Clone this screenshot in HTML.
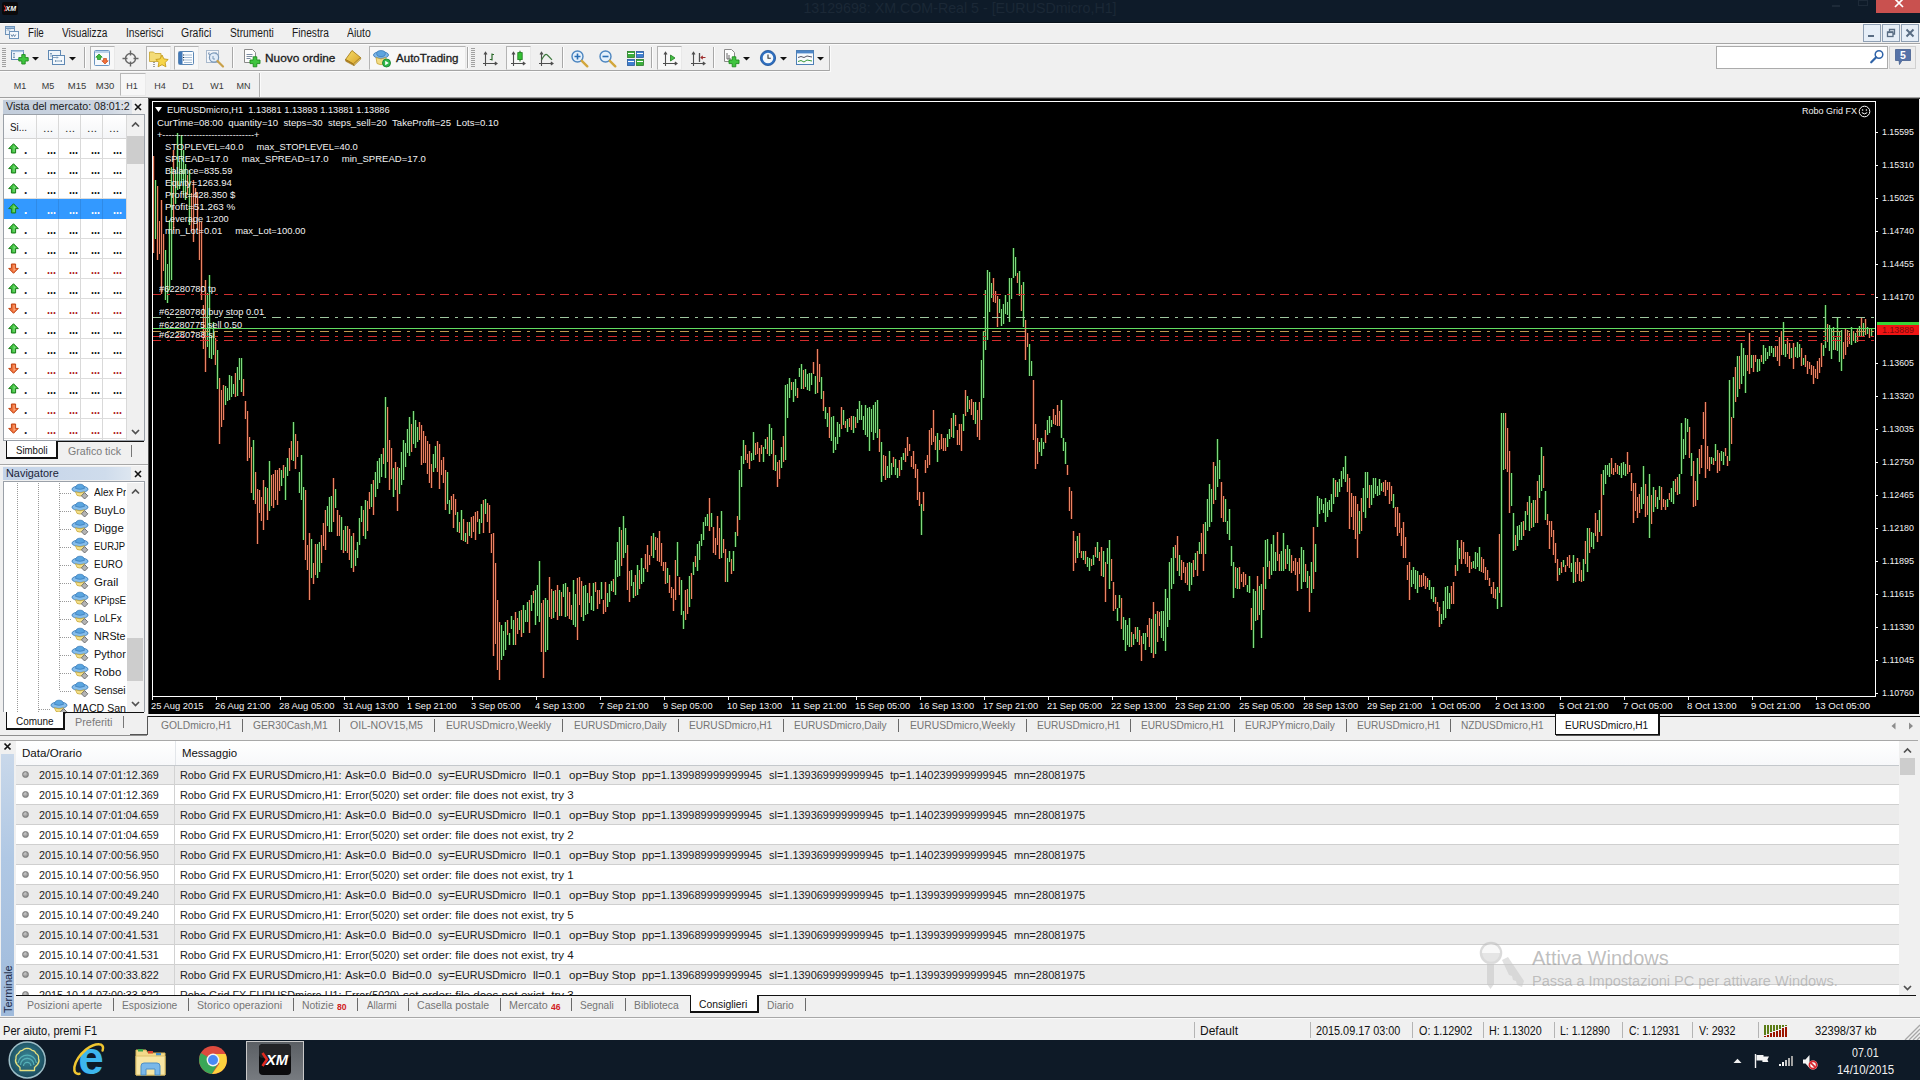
<!DOCTYPE html>
<html lang="it"><head><meta charset="utf-8"><title>13129698: XM.COM-Real 5 - [EURUSDmicro,H1]</title>
<style>
html,body{margin:0;padding:0;}
body{width:1920px;height:1080px;overflow:hidden;position:relative;background:#f0f0f0;font-family:"Liberation Sans",sans-serif;}
.t{position:absolute;white-space:pre;display:block;}
.r{position:absolute;box-sizing:border-box;}
svg{position:absolute;overflow:visible;}
</style></head>
<body>
<div class="r" style="left:0px;top:0px;width:1920px;height:23px;background:#0e1b29;"></div>
<svg style="left:2px;top:2px" width="17" height="14" viewBox="0 0 17 14"><rect x="0" y="0" width="16" height="13" rx="2" fill="#0a0a0c"/><path d="M2.2 3.5 L4 6.3 L2.2 9.2" stroke="#d32" stroke-width="1.2" fill="none"/><text x="3.6" y="9.3" font-family="Liberation Sans, sans-serif" font-weight="bold" font-style="italic" font-size="7.5" fill="#fff" textLength="10.5" lengthAdjust="spacingAndGlyphs">XM</text></svg>
<span class="t" style="top:-1.0px;font-size:15px;line-height:17px;color:#1b2836;left:960px;transform-origin:50% 50%;transform:translateX(-50%) scaleX(0.9485);">13129698: XM.COM-Real 5 - [EURUSDmicro,H1]</span>
<div class="r" style="left:1876px;top:0px;width:44px;height:13px;background:#c9514f;"></div>
<svg style="left:1893px;top:0px" width="12" height="8" viewBox="0 0 12 8"><path d="M2 -1 L10 7 M10 -1 L2 7" stroke="#fff" stroke-width="1.700" fill="none"/></svg>
<div class="r" style="left:1832px;top:5px;width:8px;height:2px;background:#1d2a38;"></div>
<div class="r" style="left:1858px;top:0px;width:10px;height:6px;background:transparent;border:1px solid #1d2a38;"></div>
<div class="r" style="left:0px;top:22px;width:1920px;height:1px;background:#08111a;"></div>
<div class="r" style="left:0px;top:23px;width:1920px;height:20px;background:#f0f0f0;"></div>
<div class="r" style="left:0px;top:23px;width:1920px;height:1px;background:#fbfbfb;"></div>
<div class="r" style="left:0px;top:43px;width:1920px;height:1px;background:#a5a5a5;"></div>
<div class="r" style="left:0px;top:44px;width:1920px;height:1px;background:#fbfbfb;"></div>
<svg style="left:4px;top:24px" width="16" height="16" viewBox="0 0 16 16"><rect x="1.5" y="2.5" width="9" height="8" fill="#e8f0f8" stroke="#6f94ba"/><rect x="1.5" y="2.5" width="9" height="2" fill="#9fc0e0" stroke="#6f94ba"/><rect x="5.5" y="7.5" width="9" height="7" fill="#f4f8fc" stroke="#6f94ba"/><path d="M7 10.5 l1.2 2 l1.2 -2 l1.2 2 l1.2 -2" stroke="#55789e" stroke-width="0.9" fill="none"/><path d="M3 6.5 l1 -1 l1 1 l1 -1" stroke="#55789e" stroke-width="0.8" fill="none"/></svg>
<span class="t" style="top:26.0px;font-size:12px;line-height:14px;color:#1a1a1a;left:28px;transform-origin:0 50%;transform:scaleX(0.8158);">File</span>
<span class="t" style="top:26.0px;font-size:12px;line-height:14px;color:#1a1a1a;left:62px;transform-origin:0 50%;transform:scaleX(0.8426);">Visualizza</span>
<span class="t" style="top:26.0px;font-size:12px;line-height:14px;color:#1a1a1a;left:126px;transform-origin:0 50%;transform:scaleX(0.8523);">Inserisci</span>
<span class="t" style="top:26.0px;font-size:12px;line-height:14px;color:#1a1a1a;left:181px;transform-origin:0 50%;transform:scaleX(0.8714);">Grafici</span>
<span class="t" style="top:26.0px;font-size:12px;line-height:14px;color:#1a1a1a;left:230px;transform-origin:0 50%;transform:scaleX(0.8529);">Strumenti</span>
<span class="t" style="top:26.0px;font-size:12px;line-height:14px;color:#1a1a1a;left:292px;transform-origin:0 50%;transform:scaleX(0.8488);">Finestra</span>
<span class="t" style="top:26.0px;font-size:12px;line-height:14px;color:#1a1a1a;left:346.5px;transform-origin:0 50%;transform:scaleX(0.8704);">Aiuto</span>
<div class="r" style="left:1863px;top:24px;width:18px;height:18px;background:#e6eef7;border:1px solid #8e9fb3;"></div>
<div class="r" style="left:1882px;top:24px;width:18px;height:18px;background:#e6eef7;border:1px solid #8e9fb3;"></div>
<div class="r" style="left:1901px;top:24px;width:18px;height:18px;background:#e6eef7;border:1px solid #8e9fb3;"></div>
<div class="r" style="left:1868px;top:35px;width:6px;height:2px;background:#586c83;"></div>
<svg style="left:1882px;top:24px" width="18" height="18" viewBox="0 0 18 18"><path d="M7.500 7.500 v-2 h5 v4.500 h-1.500" stroke="#586c83" stroke-width="1.300" fill="none"/><rect x="5.500" y="8" width="5.500" height="4.500" fill="none" stroke="#586c83" stroke-width="1.300"/><path d="M5.500 8.300 h5.500" stroke="#586c83" stroke-width="1.600"/></svg>
<svg style="left:1901px;top:24px" width="18" height="18" viewBox="0 0 18 18"><path d="M5.5 5.5 L12.5 12.5 M12.5 5.5 L5.5 12.5" stroke="#586c83" stroke-width="2" fill="none"/></svg>
<div class="r" style="left:0px;top:45px;width:1920px;height:25px;background:#f0f0f0;"></div>
<div class="r" style="left:0px;top:70px;width:830px;height:1px;background:#a5a5a5;"></div>
<div class="r" style="left:0px;top:71px;width:831px;height:1px;background:#fbfbfb;"></div>
<div class="r" style="left:830px;top:46px;width:1px;height:25px;background:#fbfbfb;"></div>
<div class="r" style="left:2px;top:48px;width:4px;height:19px;background:repeating-linear-gradient(to bottom,#a0a0a0 0,#a0a0a0 1px,transparent 1px,transparent 2px);"></div>
<div class="r" style="left:2px;top:75px;width:4px;height:19px;background:repeating-linear-gradient(to bottom,#a0a0a0 0,#a0a0a0 1px,transparent 1px,transparent 2px);"></div>
<svg style="left:10px;top:48px" width="20" height="20" viewBox="0 0 20 20"><rect x="1.5" y="2.5" width="12" height="9" fill="#f2f7fc" stroke="#5e88b3"/><rect x="1.5" y="2.5" width="12" height="1.6" fill="#a9c6e2"/><path d="M4 5 v5 M3 6 l1 -1 l1 1 M3 9 l1 1 l1 -1" stroke="#6d8fb0" stroke-width="0.8" fill="none"/><path d="M11 7 h3 v-3 h3.4 v3 h3 v3.4 h-3 v3 h-3.4 v-3 h-3 z" transform="translate(-2.2,2.6)" fill="#3fc53f" stroke="#1e8a1e" stroke-width="0.9"/></svg>
<svg style="left:32px;top:57px" width="7" height="4" viewBox="0 0 7 4"><path d="M0 0 H7 L3.5 3.6 Z" fill="#111"/></svg>
<svg style="left:47px;top:48px" width="20" height="20" viewBox="0 0 20 20"><rect x="1.5" y="2.5" width="12" height="9" fill="#eef4fa" stroke="#5e88b3"/><rect x="5.5" y="7.5" width="12" height="9" fill="#f4f8fc" stroke="#5e88b3"/><path d="M4 5 v4 M3 6 l1 -1 l1 1 M5 9.5 h6 M10 8.5 l1 1 l-1 1" stroke="#6d8fb0" stroke-width="0.8" fill="none"/><path d="M8 13 h7 M9 12 l-1 1 l1 1 M14 12 l1 1 l-1 1" stroke="#6d8fb0" stroke-width="0.8" fill="none"/></svg>
<svg style="left:69px;top:57px" width="7" height="4" viewBox="0 0 7 4"><path d="M0 0 H7 L3.5 3.6 Z" fill="#111"/></svg>
<div class="r" style="left:84px;top:47px;width:1px;height:21px;background:#a8a8a8;"></div>
<div class="r" style="left:85px;top:47px;width:1px;height:21px;background:#fdfdfd;"></div>
<div class="r" style="left:90px;top:46px;width:25px;height:24px;background:#f8f8f8;border:1px solid #b4b4b4;border-right-color:#e8e8e8;border-bottom-color:#e8e8e8;"></div>
<svg style="left:93px;top:49px" width="19" height="19" viewBox="0 0 19 19"><rect x="1.5" y="1.5" width="15" height="15" rx="1" fill="#f6f9fd" stroke="#6a95c2"/><rect x="2" y="2" width="14" height="2" fill="#b9d2ea"/><path d="M6 5 l3.2 3.2 h-1.7 v2.3 h-3 v-2.3 h-1.7 z" fill="#3dbb3d" stroke="#1d8a1d" stroke-width="0.7"/><path d="M12 15 l3.2 -3.2 h-1.7 v-2.3 h-3 v2.3 h-1.7 z" fill="#f0703a" stroke="#c8481a" stroke-width="0.7"/></svg>
<svg style="left:121px;top:49px" width="19" height="19" viewBox="0 0 19 19"><circle cx="9.5" cy="9.5" r="5" fill="none" stroke="#666" stroke-width="1.4"/><path d="M9.5 1.5 v5 M9.5 12.5 v5 M1.5 9.5 h5 M12.5 9.5 h5" stroke="#666" stroke-width="1.4"/></svg>
<div class="r" style="left:146px;top:46px;width:25px;height:24px;background:#f8f8f8;border:1px solid #b4b4b4;border-right-color:#e8e8e8;border-bottom-color:#e8e8e8;"></div>
<svg style="left:148px;top:48px" width="22" height="21" viewBox="0 0 22 21"><path d="M1.5 4 h4 l1.5 1.5 h6 v8 h-11.5 z" fill="#f4dc78" stroke="#c9a93a" stroke-width="0.9"/><path d="M14 7 l1.9 3.9 l4.3 0.6 l-3.1 3 l0.8 4.3 l-3.9 -2.1 l-3.9 2.1 l0.8 -4.3 l-3.1 -3 l4.3 -0.6 z" fill="#f7d64a" stroke="#c49a1a" stroke-width="0.9"/><path d="M6 14 v5" stroke="#444" stroke-width="1" stroke-dasharray="1 1"/></svg>
<div class="r" style="left:174px;top:46px;width:25px;height:24px;background:#f8f8f8;border:1px solid #b4b4b4;border-right-color:#e8e8e8;border-bottom-color:#e8e8e8;"></div>
<svg style="left:177px;top:49px" width="19" height="19" viewBox="0 0 19 19"><rect x="1.5" y="2.5" width="15" height="13" rx="1" fill="#fbfdff" stroke="#5b87b5"/><rect x="2" y="3" width="3.5" height="12" fill="#3f77b8"/><path d="M7 6 h8 M7 8.5 h8 M7 11 h8 M7 13.5 h8" stroke="#9bb4cf" stroke-width="0.9"/><path d="M6 6 h1 M6 8.5 h1 M6 11 h1" stroke="#234" stroke-width="1"/></svg>
<svg style="left:205px;top:48px" width="21" height="21" viewBox="0 0 21 21"><rect x="1.5" y="2.5" width="12" height="12" fill="#f3f6fa" stroke="#a9b9cc"/><path d="M3 5 l2 2 M4 4 v3 M11 4 v3 M10 5 l2 2" stroke="#7d98b5" stroke-width="0.8"/><circle cx="9" cy="9.5" r="4.6" fill="#dceaf7" fill-opacity="0.8" stroke="#7897b8" stroke-width="1.2"/><path d="M12.5 13 l5.5 5.5" stroke="#c9a14a" stroke-width="2.2" stroke-linecap="round"/><path d="M8 8 v3 h2" stroke="#6d8fb0" stroke-width="0.9" fill="none"/></svg>
<div class="r" style="left:232px;top:47px;width:1px;height:21px;background:#a8a8a8;"></div>
<div class="r" style="left:233px;top:47px;width:1px;height:21px;background:#fdfdfd;"></div>
<svg style="left:242px;top:48px" width="20" height="21" viewBox="0 0 20 21"><path d="M2.5 1.5 h8 l3 3 v10 h-11 z" fill="#fdfdfd" stroke="#8a8a8a"/><path d="M4.5 6.5 h6 M4.5 8.5 h6 M4.5 10.5 h4" stroke="#7a8aa0" stroke-width="1"/><path d="M8 12 h3.2 v-3.2 h3.6 v3.2 h3.2 v3.6 h-3.2 v3.2 h-3.6 v-3.2 h-3.2 z" fill="#3fc53f" stroke="#1e8a1e" stroke-width="0.9"/></svg>
<span class="t" style="top:52.0px;font-size:11px;line-height:12px;color:#1c1c1c;left:264.5px;transform-origin:0 50%;transform:scaleX(1.0769);-webkit-text-stroke:0.3px #1c1c1c;">Nuovo ordine</span>
<svg style="left:343px;top:49px" width="20" height="18" viewBox="0 0 20 18"><defs><linearGradient id="bk" x1="0" y1="0" x2="1" y2="1"><stop offset="0" stop-color="#f7de6a"/><stop offset="1" stop-color="#d9a42a"/></linearGradient></defs><path d="M9 1.500 L17.500 8.500 L10.500 15 L2.500 10.500 Z" fill="url(#bk)" stroke="#a8801c" stroke-width="0.900"/><path d="M2.500 10.500 L10.500 15 L11 16.600 L2.800 12.300 Z" fill="#c08a1e" stroke="#8e6a14" stroke-width="0.600"/><path d="M10.500 15 L17.500 8.500 L17.800 10 L11 16.600 Z" fill="#e9c45a" stroke="#8e6a14" stroke-width="0.600"/></svg>
<div class="r" style="left:369px;top:46px;width:97px;height:24px;background:#f8f8f8;border:1px solid #b4b4b4;border-right-color:#e8e8e8;border-bottom-color:#e8e8e8;"></div>
<svg style="left:372px;top:48px" width="20" height="21" viewBox="0 0 20 21"><ellipse cx="9" cy="7" rx="7.5" ry="3.4" fill="#7fb6e6" stroke="#3d7db8" stroke-width="0.9"/><ellipse cx="9" cy="5.6" rx="4.3" ry="3" fill="#5da4de" stroke="#3d7db8" stroke-width="0.8"/><path d="M4 9.5 q5 3 10 0 l-1 6 q-4 2.5 -8 0 z" fill="#f3dc84" stroke="#c4a53a" stroke-width="0.8"/><circle cx="14.5" cy="15" r="4" fill="#2fb84a" stroke="#1c8430" stroke-width="0.9"/><path d="M13.2 12.8 v4.4 l3.6 -2.2 z" fill="#fff"/></svg>
<span class="t" style="top:52.0px;font-size:11px;line-height:12px;color:#1c1c1c;left:395.5px;transform-origin:0 50%;transform:scaleX(1.0500);-webkit-text-stroke:0.3px #1c1c1c;">AutoTrading</span>
<div class="r" style="left:467px;top:47px;width:1px;height:21px;background:#a8a8a8;"></div>
<div class="r" style="left:468px;top:47px;width:1px;height:21px;background:#fdfdfd;"></div>
<div class="r" style="left:471px;top:48px;width:4px;height:19px;background:repeating-linear-gradient(to bottom,#a0a0a0 0,#a0a0a0 1px,transparent 1px,transparent 2px);"></div>
<svg style="left:482px;top:50px" width="17" height="18" viewBox="0 0 17 18" fill="none"><path d="M3.5 2.5 V16 M1 13.5 H14.500 M2 4.500 L3.500 2.200 L5 4.500 M12.800 12 L15 13.500 L12.800 15" stroke="#4e4e4e" stroke-width="1.100"/><path d="M10 3.500 V10.500 M10 4.500 H12 M7.800 9.500 H10" stroke="#2c6a2c" stroke-width="1.200"/></svg>
<div class="r" style="left:506px;top:46px;width:25px;height:24px;background:#f8f8f8;border:1px solid #b4b4b4;border-right-color:#e8e8e8;border-bottom-color:#e8e8e8;"></div>
<svg style="left:510px;top:50px" width="17" height="18" viewBox="0 0 17 18" fill="none"><path d="M3.5 2.5 V16 M1 13.5 H14.500 M2 4.500 L3.500 2.200 L5 4.500 M12.800 12 L15 13.500 L12.800 15" stroke="#4e4e4e" stroke-width="1.100"/><path d="M10 0.800 V11.500" stroke="#1f6f1f" stroke-width="1.100"/><rect x="7.800" y="2.600" width="4.400" height="7" fill="#35c135" stroke="#1f7a1f" stroke-width="0.800"/></svg>
<svg style="left:538px;top:50px" width="17" height="18" viewBox="0 0 17 18" fill="none"><path d="M3.5 2.5 V16 M1 13.5 H14.500 M2 4.500 L3.500 2.200 L5 4.500 M12.800 12 L15 13.500 L12.800 15" stroke="#4e4e4e" stroke-width="1.100"/><path d="M3.500 10 Q7 3 9 4.800 T14 9.800" stroke="#3f7a3f" stroke-width="1.200"/></svg>
<div class="r" style="left:562px;top:47px;width:1px;height:21px;background:#a8a8a8;"></div>
<div class="r" style="left:563px;top:47px;width:1px;height:21px;background:#fdfdfd;"></div>
<svg style="left:570px;top:49px" width="20" height="20" viewBox="0 0 20 20"><circle cx="7.5" cy="7.5" r="5.5" fill="#e4f0fb" stroke="#4d86c0" stroke-width="1.4"/><path d="M4.5 7.5 h6 M7.5 4.5 v6" stroke="#2a6fb5" stroke-width="1.6"/><path d="M11.8 11.8 l5.5 5.5" stroke="#d2a63c" stroke-width="2.4" stroke-linecap="round"/></svg>
<svg style="left:598px;top:49px" width="20" height="20" viewBox="0 0 20 20"><circle cx="7.5" cy="7.5" r="5.5" fill="#e4f0fb" stroke="#4d86c0" stroke-width="1.4"/><path d="M4.5 7.5 h6" stroke="#2a6fb5" stroke-width="1.6"/><path d="M11.8 11.8 l5.5 5.5" stroke="#d2a63c" stroke-width="2.4" stroke-linecap="round"/></svg>
<svg style="left:626px;top:49px" width="19" height="19" viewBox="0 0 19 19"><rect x="1.5" y="2.5" width="7" height="6" fill="#3cae3c" stroke="#2a7a2a" stroke-width="0.8"/><rect x="10.5" y="2.5" width="7" height="6" fill="#3f7fd0" stroke="#2a5a9a" stroke-width="0.8"/><rect x="1.5" y="10.5" width="7" height="6" fill="#3f7fd0" stroke="#2a5a9a" stroke-width="0.8"/><rect x="10.5" y="10.5" width="7" height="6" fill="#3cae3c" stroke="#2a7a2a" stroke-width="0.8"/><path d="M2 4.5 h6 M11 4.5 h6 M2 12.5 h6 M11 12.5 h6" stroke="#fff" stroke-width="1.2"/></svg>
<div class="r" style="left:651px;top:47px;width:1px;height:21px;background:#a8a8a8;"></div>
<div class="r" style="left:652px;top:47px;width:1px;height:21px;background:#fdfdfd;"></div>
<div class="r" style="left:657px;top:46px;width:25px;height:24px;background:#f8f8f8;border:1px solid #b4b4b4;border-right-color:#e8e8e8;border-bottom-color:#e8e8e8;"></div>
<svg style="left:662px;top:50px" width="17" height="18" viewBox="0 0 17 18" fill="none"><path d="M3.5 2.5 V16 M1 13.5 H14.500 M2 4.500 L3.500 2.200 L5 4.500 M12.800 12 L15 13.500 L12.800 15" stroke="#4e4e4e" stroke-width="1.100"/><path d="M8.500 5 V11 L13 8 Z" fill="#43c043" stroke="#1f7a1f" stroke-width="0.800"/></svg>
<svg style="left:690px;top:50px" width="17" height="18" viewBox="0 0 17 18" fill="none"><path d="M3.5 2.5 V16 M1 13.5 H14.500 M2 4.500 L3.500 2.200 L5 4.500 M12.800 12 L15 13.500 L12.800 15" stroke="#4e4e4e" stroke-width="1.100"/><path d="M9.500 3 V12" stroke="#4e4e4e" stroke-width="1.300"/><path d="M15.500 7.500 H11 M12.800 5.800 L11 7.500 L12.800 9.200" stroke="#a03030" stroke-width="1.100"/></svg>
<div class="r" style="left:713px;top:47px;width:1px;height:21px;background:#a8a8a8;"></div>
<div class="r" style="left:714px;top:47px;width:1px;height:21px;background:#fdfdfd;"></div>
<svg style="left:722px;top:48px" width="20" height="21" viewBox="0 0 20 21"><path d="M2.5 1.5 h7 l3 3 v9 h-10 z" fill="#fdfdfd" stroke="#8a8a8a"/><path d="M5 5 v6 M5 11 h4 M7 7 v4" stroke="#666" stroke-width="1"/><path d="M7 12 h3.2 v-3.2 h3.6 v3.2 h3.2 v3.6 h-3.2 v3.2 h-3.6 v-3.2 h-3.2 z" fill="#3fc53f" stroke="#1e8a1e" stroke-width="0.9"/></svg>
<svg style="left:743px;top:57px" width="7" height="4" viewBox="0 0 7 4"><path d="M0 0 H7 L3.5 3.6 Z" fill="#111"/></svg>
<svg style="left:759px;top:49px" width="18" height="18" viewBox="0 0 18 18"><circle cx="9" cy="9" r="7.6" fill="#2e6fc0" stroke="#1d4f94" stroke-width="0.8"/><circle cx="9" cy="9" r="5.3" fill="#f4f8fc"/><path d="M9 5.5 v3.8 h2.8" stroke="#333" stroke-width="1.1" fill="none"/></svg>
<svg style="left:780px;top:57px" width="7" height="4" viewBox="0 0 7 4"><path d="M0 0 H7 L3.5 3.6 Z" fill="#111"/></svg>
<svg style="left:796px;top:50px" width="18" height="16" viewBox="0 0 18 16"><rect x="0.5" y="0.5" width="17" height="14" fill="#f7fafd" stroke="#4d7fb5"/><rect x="1" y="1" width="16" height="2.4" fill="#4d86c8"/><path d="M2 7.5 l3 -1 l3 1 l3 -1.5 l5 1" stroke="#556" stroke-width="1" fill="none"/><path d="M2 11.5 l3 -1 l3 1.5 l3 -2 l5 1" stroke="#3a9a3a" stroke-width="1" fill="none"/></svg>
<svg style="left:817px;top:57px" width="7" height="4" viewBox="0 0 7 4"><path d="M0 0 H7 L3.5 3.6 Z" fill="#111"/></svg>
<div class="r" style="left:829px;top:46px;width:1px;height:25px;background:#b0b0b0;"></div>
<div class="r" style="left:1716px;top:46px;width:172px;height:23px;background:#fff;border:1px solid #ababab;"></div>
<svg style="left:1869px;top:49px" width="16" height="16" viewBox="0 0 16 16"><circle cx="10" cy="5.5" r="3.8" fill="#fff" stroke="#2f63a8" stroke-width="1.5"/><path d="M7.2 8.3 L2.2 13.3" stroke="#2f63a8" stroke-width="2.2" stroke-linecap="round"/></svg>
<div class="r" style="left:1889px;top:46px;width:27px;height:23px;background:#eeeeee;border:1px solid #d0d0d0;"></div>
<svg style="left:1894px;top:48px" width="18" height="19" viewBox="0 0 18 19"><path d="M1.5 1.5 h15 v11 h-8.5 l-2.5 4 l-0.5 -4 h-3.5 z" fill="#5673a8" stroke="#45608f" stroke-width="0.8"/><text x="9" y="11" text-anchor="middle" font-family="Liberation Sans, sans-serif" font-weight="bold" font-size="10.5" fill="#fff">5</text></svg>
<div class="r" style="left:0px;top:72px;width:1920px;height:25px;background:#f0f0f0;"></div>
<div class="r" style="left:260px;top:73px;width:1px;height:24px;background:#fbfbfb;"></div>
<div class="r" style="left:0px;top:97px;width:1920px;height:1px;background:#a0a0a0;"></div>
<div class="r" style="left:0px;top:98px;width:148px;height:1px;background:#f6f6f6;"></div>
<div class="r" style="left:120px;top:73px;width:26px;height:23px;background:#f7f7f7;border:1px solid #b8b8b8;border-right-color:#eaeaea;border-bottom-color:#eaeaea;"></div>
<span class="t" style="top:81.0px;font-size:9px;line-height:10px;color:#3a3a3a;left:20px;transform-origin:50% 50%;transform:translateX(-50%) scaleX(1.0000);">M1</span>
<span class="t" style="top:81.0px;font-size:9px;line-height:10px;color:#3a3a3a;left:48px;transform-origin:50% 50%;transform:translateX(-50%) scaleX(1.0000);">M5</span>
<span class="t" style="top:81.0px;font-size:9px;line-height:10px;color:#3a3a3a;left:76.5px;transform-origin:50% 50%;transform:translateX(-50%) scaleX(1.0556);">M15</span>
<span class="t" style="top:81.0px;font-size:9px;line-height:10px;color:#3a3a3a;left:104.5px;transform-origin:50% 50%;transform:translateX(-50%) scaleX(1.0556);">M30</span>
<span class="t" style="top:81.0px;font-size:9px;line-height:10px;color:#3a3a3a;left:132px;transform-origin:50% 50%;transform:translateX(-50%) scaleX(1.0000);">H1</span>
<span class="t" style="top:81.0px;font-size:9px;line-height:10px;color:#3a3a3a;left:160px;transform-origin:50% 50%;transform:translateX(-50%) scaleX(1.0000);">H4</span>
<span class="t" style="top:81.0px;font-size:9px;line-height:10px;color:#3a3a3a;left:188px;transform-origin:50% 50%;transform:translateX(-50%) scaleX(1.0000);">D1</span>
<span class="t" style="top:81.0px;font-size:9px;line-height:10px;color:#3a3a3a;left:217px;transform-origin:50% 50%;transform:translateX(-50%) scaleX(1.0000);">W1</span>
<span class="t" style="top:81.0px;font-size:9px;line-height:10px;color:#3a3a3a;left:243.5px;transform-origin:50% 50%;transform:translateX(-50%) scaleX(1.0000);">MN</span>
<div class="r" style="left:259px;top:73px;width:1px;height:24px;background:#b0b0b0;"></div>
<div class="r" style="left:0px;top:99px;width:150px;height:640px;background:#f0f0f0;"></div>
<div class="r" style="left:3px;top:100px;width:129px;height:14px;background:linear-gradient(to right,#c2cddb 0%,#cdd6e2 80%,#dfe4ea 100%);"></div>
<span class="t" style="top:100.0px;font-size:11px;line-height:12px;color:#1a1a1a;left:6px;transform-origin:0 50%;transform:scaleX(0.9688);">Vista del mercato: 08:01:2</span>
<svg style="left:134px;top:103px" width="8" height="8" viewBox="0 0 8 8"><path d="M1 1 L7 7 M7 1 L1 7" stroke="#111" stroke-width="1.6"/></svg>
<div class="r" style="left:3px;top:114px;width:142px;height:327px;background:#fff;border:1px solid #9aa0a8;"></div>
<div class="r" style="left:4px;top:115px;width:122px;height:24px;background:linear-gradient(to bottom,#ffffff,#f4f5f7);border-bottom:1px solid #d5d5d5;"></div>
<div class="r" style="left:36px;top:115px;width:1px;height:325px;background:#d9d9d9;"></div>
<div class="r" style="left:58px;top:115px;width:1px;height:325px;background:#d9d9d9;"></div>
<div class="r" style="left:80px;top:115px;width:1px;height:325px;background:#d9d9d9;"></div>
<div class="r" style="left:102px;top:115px;width:1px;height:325px;background:#d9d9d9;"></div>
<div class="r" style="left:126px;top:115px;width:1px;height:325px;background:#d9d9d9;"></div>
<span class="t" style="top:121.0px;font-size:11px;line-height:12px;color:#111;left:10px;transform-origin:0 50%;transform:scaleX(0.8947);">Si...</span>
<span class="t" style="top:122.0px;font-size:11px;line-height:12px;color:#333;left:43px;transform-origin:0 50%;transform:scaleX(1.1111);">...</span>
<span class="t" style="top:122.0px;font-size:11px;line-height:12px;color:#333;left:65px;transform-origin:0 50%;transform:scaleX(1.1111);">...</span>
<span class="t" style="top:122.0px;font-size:11px;line-height:12px;color:#333;left:87px;transform-origin:0 50%;transform:scaleX(1.1111);">...</span>
<span class="t" style="top:122.0px;font-size:11px;line-height:12px;color:#333;left:109px;transform-origin:0 50%;transform:scaleX(1.1111);">...</span>
<div class="r" style="left:4px;top:158px;width:122px;height:1px;background:#dcdcdc;"></div>
<svg style="left:8px;top:143px" width="11" height="11" viewBox="0 0 11 11"><path d="M5.5 0.7 L10.3 5.6 H7.6 V10 H3.4 V5.6 H0.7 Z" fill="#3fc23f" stroke="#1b7d1b" stroke-width="1"/><path d="M5.5 2.3 L8 5 H6.6 V9 H5.5 Z" fill="#9be89b" opacity=".7"/></svg>
<span class="t" style="top:143.0px;font-size:12px;line-height:14px;color:#223;font-weight:bold;left:24px;transform-origin:0 50%;">.</span>
<span class="t" style="top:143.0px;font-size:12px;line-height:14px;color:#111;font-weight:bold;left:47px;transform-origin:0 50%;transform:scaleX(0.9000);">...</span>
<span class="t" style="top:143.0px;font-size:12px;line-height:14px;color:#111;font-weight:bold;left:69px;transform-origin:0 50%;transform:scaleX(0.9000);">...</span>
<span class="t" style="top:143.0px;font-size:12px;line-height:14px;color:#111;font-weight:bold;left:91px;transform-origin:0 50%;transform:scaleX(0.9000);">...</span>
<span class="t" style="top:143.0px;font-size:12px;line-height:14px;color:#111;font-weight:bold;left:113px;transform-origin:0 50%;transform:scaleX(0.9000);">...</span>
<div class="r" style="left:4px;top:178px;width:122px;height:1px;background:#dcdcdc;"></div>
<svg style="left:8px;top:163px" width="11" height="11" viewBox="0 0 11 11"><path d="M5.5 0.7 L10.3 5.6 H7.6 V10 H3.4 V5.6 H0.7 Z" fill="#3fc23f" stroke="#1b7d1b" stroke-width="1"/><path d="M5.5 2.3 L8 5 H6.6 V9 H5.5 Z" fill="#9be89b" opacity=".7"/></svg>
<span class="t" style="top:163.0px;font-size:12px;line-height:14px;color:#223;font-weight:bold;left:24px;transform-origin:0 50%;">.</span>
<span class="t" style="top:163.0px;font-size:12px;line-height:14px;color:#111;font-weight:bold;left:47px;transform-origin:0 50%;transform:scaleX(0.9000);">...</span>
<span class="t" style="top:163.0px;font-size:12px;line-height:14px;color:#111;font-weight:bold;left:69px;transform-origin:0 50%;transform:scaleX(0.9000);">...</span>
<span class="t" style="top:163.0px;font-size:12px;line-height:14px;color:#111;font-weight:bold;left:91px;transform-origin:0 50%;transform:scaleX(0.9000);">...</span>
<span class="t" style="top:163.0px;font-size:12px;line-height:14px;color:#111;font-weight:bold;left:113px;transform-origin:0 50%;transform:scaleX(0.9000);">...</span>
<div class="r" style="left:4px;top:198px;width:122px;height:1px;background:#dcdcdc;"></div>
<svg style="left:8px;top:183px" width="11" height="11" viewBox="0 0 11 11"><path d="M5.5 0.7 L10.3 5.6 H7.6 V10 H3.4 V5.6 H0.7 Z" fill="#3fc23f" stroke="#1b7d1b" stroke-width="1"/><path d="M5.5 2.3 L8 5 H6.6 V9 H5.5 Z" fill="#9be89b" opacity=".7"/></svg>
<span class="t" style="top:183.0px;font-size:12px;line-height:14px;color:#223;font-weight:bold;left:24px;transform-origin:0 50%;">.</span>
<span class="t" style="top:183.0px;font-size:12px;line-height:14px;color:#111;font-weight:bold;left:47px;transform-origin:0 50%;transform:scaleX(0.9000);">...</span>
<span class="t" style="top:183.0px;font-size:12px;line-height:14px;color:#111;font-weight:bold;left:69px;transform-origin:0 50%;transform:scaleX(0.9000);">...</span>
<span class="t" style="top:183.0px;font-size:12px;line-height:14px;color:#111;font-weight:bold;left:91px;transform-origin:0 50%;transform:scaleX(0.9000);">...</span>
<span class="t" style="top:183.0px;font-size:12px;line-height:14px;color:#111;font-weight:bold;left:113px;transform-origin:0 50%;transform:scaleX(0.9000);">...</span>
<div class="r" style="left:4px;top:199px;width:122px;height:20px;background:#3399ff;"></div>
<div class="r" style="left:4px;top:218px;width:122px;height:1px;background:#3399ff;"></div>
<svg style="left:8px;top:203px" width="11" height="11" viewBox="0 0 11 11"><path d="M5.5 0.7 L10.3 5.6 H7.6 V10 H3.4 V5.6 H0.7 Z" fill="#3fc23f" stroke="#1b7d1b" stroke-width="1"/><path d="M5.5 2.3 L8 5 H6.6 V9 H5.5 Z" fill="#9be89b" opacity=".7"/></svg>
<span class="t" style="top:203.0px;font-size:12px;line-height:14px;color:#fff;font-weight:bold;left:24px;transform-origin:0 50%;">.</span>
<span class="t" style="top:203.0px;font-size:12px;line-height:14px;color:#fff;font-weight:bold;left:47px;transform-origin:0 50%;transform:scaleX(0.9000);">...</span>
<span class="t" style="top:203.0px;font-size:12px;line-height:14px;color:#fff;font-weight:bold;left:69px;transform-origin:0 50%;transform:scaleX(0.9000);">...</span>
<span class="t" style="top:203.0px;font-size:12px;line-height:14px;color:#fff;font-weight:bold;left:91px;transform-origin:0 50%;transform:scaleX(0.9000);">...</span>
<span class="t" style="top:203.0px;font-size:12px;line-height:14px;color:#fff;font-weight:bold;left:113px;transform-origin:0 50%;transform:scaleX(0.9000);">...</span>
<div class="r" style="left:4px;top:238px;width:122px;height:1px;background:#dcdcdc;"></div>
<svg style="left:8px;top:223px" width="11" height="11" viewBox="0 0 11 11"><path d="M5.5 0.7 L10.3 5.6 H7.6 V10 H3.4 V5.6 H0.7 Z" fill="#3fc23f" stroke="#1b7d1b" stroke-width="1"/><path d="M5.5 2.3 L8 5 H6.6 V9 H5.5 Z" fill="#9be89b" opacity=".7"/></svg>
<span class="t" style="top:223.0px;font-size:12px;line-height:14px;color:#223;font-weight:bold;left:24px;transform-origin:0 50%;">.</span>
<span class="t" style="top:223.0px;font-size:12px;line-height:14px;color:#111;font-weight:bold;left:47px;transform-origin:0 50%;transform:scaleX(0.9000);">...</span>
<span class="t" style="top:223.0px;font-size:12px;line-height:14px;color:#111;font-weight:bold;left:69px;transform-origin:0 50%;transform:scaleX(0.9000);">...</span>
<span class="t" style="top:223.0px;font-size:12px;line-height:14px;color:#111;font-weight:bold;left:91px;transform-origin:0 50%;transform:scaleX(0.9000);">...</span>
<span class="t" style="top:223.0px;font-size:12px;line-height:14px;color:#111;font-weight:bold;left:113px;transform-origin:0 50%;transform:scaleX(0.9000);">...</span>
<div class="r" style="left:4px;top:258px;width:122px;height:1px;background:#dcdcdc;"></div>
<svg style="left:8px;top:243px" width="11" height="11" viewBox="0 0 11 11"><path d="M5.5 0.7 L10.3 5.6 H7.6 V10 H3.4 V5.6 H0.7 Z" fill="#3fc23f" stroke="#1b7d1b" stroke-width="1"/><path d="M5.5 2.3 L8 5 H6.6 V9 H5.5 Z" fill="#9be89b" opacity=".7"/></svg>
<span class="t" style="top:243.0px;font-size:12px;line-height:14px;color:#223;font-weight:bold;left:24px;transform-origin:0 50%;">.</span>
<span class="t" style="top:243.0px;font-size:12px;line-height:14px;color:#111;font-weight:bold;left:47px;transform-origin:0 50%;transform:scaleX(0.9000);">...</span>
<span class="t" style="top:243.0px;font-size:12px;line-height:14px;color:#111;font-weight:bold;left:69px;transform-origin:0 50%;transform:scaleX(0.9000);">...</span>
<span class="t" style="top:243.0px;font-size:12px;line-height:14px;color:#111;font-weight:bold;left:91px;transform-origin:0 50%;transform:scaleX(0.9000);">...</span>
<span class="t" style="top:243.0px;font-size:12px;line-height:14px;color:#111;font-weight:bold;left:113px;transform-origin:0 50%;transform:scaleX(0.9000);">...</span>
<div class="r" style="left:4px;top:278px;width:122px;height:1px;background:#dcdcdc;"></div>
<svg style="left:8px;top:263px" width="11" height="11" viewBox="0 0 11 11"><path d="M5.5 10.3 L10.3 5.4 H7.6 V1 H3.4 V5.4 H0.7 Z" fill="#f0713a" stroke="#c04414" stroke-width="1"/><path d="M5.5 8.7 L8 6 H6.6 V2 H5.5 Z" fill="#ffc09a" opacity=".7"/></svg>
<span class="t" style="top:263.0px;font-size:12px;line-height:14px;color:#223;font-weight:bold;left:24px;transform-origin:0 50%;">.</span>
<span class="t" style="top:263.0px;font-size:12px;line-height:14px;color:#b02020;font-weight:bold;left:47px;transform-origin:0 50%;transform:scaleX(0.9000);">...</span>
<span class="t" style="top:263.0px;font-size:12px;line-height:14px;color:#b02020;font-weight:bold;left:69px;transform-origin:0 50%;transform:scaleX(0.9000);">...</span>
<span class="t" style="top:263.0px;font-size:12px;line-height:14px;color:#b02020;font-weight:bold;left:91px;transform-origin:0 50%;transform:scaleX(0.9000);">...</span>
<span class="t" style="top:263.0px;font-size:12px;line-height:14px;color:#b02020;font-weight:bold;left:113px;transform-origin:0 50%;transform:scaleX(0.9000);">...</span>
<div class="r" style="left:4px;top:298px;width:122px;height:1px;background:#dcdcdc;"></div>
<svg style="left:8px;top:283px" width="11" height="11" viewBox="0 0 11 11"><path d="M5.5 0.7 L10.3 5.6 H7.6 V10 H3.4 V5.6 H0.7 Z" fill="#3fc23f" stroke="#1b7d1b" stroke-width="1"/><path d="M5.5 2.3 L8 5 H6.6 V9 H5.5 Z" fill="#9be89b" opacity=".7"/></svg>
<span class="t" style="top:283.0px;font-size:12px;line-height:14px;color:#223;font-weight:bold;left:24px;transform-origin:0 50%;">.</span>
<span class="t" style="top:283.0px;font-size:12px;line-height:14px;color:#111;font-weight:bold;left:47px;transform-origin:0 50%;transform:scaleX(0.9000);">...</span>
<span class="t" style="top:283.0px;font-size:12px;line-height:14px;color:#111;font-weight:bold;left:69px;transform-origin:0 50%;transform:scaleX(0.9000);">...</span>
<span class="t" style="top:283.0px;font-size:12px;line-height:14px;color:#111;font-weight:bold;left:91px;transform-origin:0 50%;transform:scaleX(0.9000);">...</span>
<span class="t" style="top:283.0px;font-size:12px;line-height:14px;color:#111;font-weight:bold;left:113px;transform-origin:0 50%;transform:scaleX(0.9000);">...</span>
<div class="r" style="left:4px;top:318px;width:122px;height:1px;background:#dcdcdc;"></div>
<svg style="left:8px;top:303px" width="11" height="11" viewBox="0 0 11 11"><path d="M5.5 10.3 L10.3 5.4 H7.6 V1 H3.4 V5.4 H0.7 Z" fill="#f0713a" stroke="#c04414" stroke-width="1"/><path d="M5.5 8.7 L8 6 H6.6 V2 H5.5 Z" fill="#ffc09a" opacity=".7"/></svg>
<span class="t" style="top:303.0px;font-size:12px;line-height:14px;color:#223;font-weight:bold;left:24px;transform-origin:0 50%;">.</span>
<span class="t" style="top:303.0px;font-size:12px;line-height:14px;color:#b02020;font-weight:bold;left:47px;transform-origin:0 50%;transform:scaleX(0.9000);">...</span>
<span class="t" style="top:303.0px;font-size:12px;line-height:14px;color:#b02020;font-weight:bold;left:69px;transform-origin:0 50%;transform:scaleX(0.9000);">...</span>
<span class="t" style="top:303.0px;font-size:12px;line-height:14px;color:#b02020;font-weight:bold;left:91px;transform-origin:0 50%;transform:scaleX(0.9000);">...</span>
<span class="t" style="top:303.0px;font-size:12px;line-height:14px;color:#b02020;font-weight:bold;left:113px;transform-origin:0 50%;transform:scaleX(0.9000);">...</span>
<div class="r" style="left:4px;top:338px;width:122px;height:1px;background:#dcdcdc;"></div>
<svg style="left:8px;top:323px" width="11" height="11" viewBox="0 0 11 11"><path d="M5.5 0.7 L10.3 5.6 H7.6 V10 H3.4 V5.6 H0.7 Z" fill="#3fc23f" stroke="#1b7d1b" stroke-width="1"/><path d="M5.5 2.3 L8 5 H6.6 V9 H5.5 Z" fill="#9be89b" opacity=".7"/></svg>
<span class="t" style="top:323.0px;font-size:12px;line-height:14px;color:#223;font-weight:bold;left:24px;transform-origin:0 50%;">.</span>
<span class="t" style="top:323.0px;font-size:12px;line-height:14px;color:#111;font-weight:bold;left:47px;transform-origin:0 50%;transform:scaleX(0.9000);">...</span>
<span class="t" style="top:323.0px;font-size:12px;line-height:14px;color:#111;font-weight:bold;left:69px;transform-origin:0 50%;transform:scaleX(0.9000);">...</span>
<span class="t" style="top:323.0px;font-size:12px;line-height:14px;color:#111;font-weight:bold;left:91px;transform-origin:0 50%;transform:scaleX(0.9000);">...</span>
<span class="t" style="top:323.0px;font-size:12px;line-height:14px;color:#111;font-weight:bold;left:113px;transform-origin:0 50%;transform:scaleX(0.9000);">...</span>
<div class="r" style="left:4px;top:358px;width:122px;height:1px;background:#dcdcdc;"></div>
<svg style="left:8px;top:343px" width="11" height="11" viewBox="0 0 11 11"><path d="M5.5 0.7 L10.3 5.6 H7.6 V10 H3.4 V5.6 H0.7 Z" fill="#3fc23f" stroke="#1b7d1b" stroke-width="1"/><path d="M5.5 2.3 L8 5 H6.6 V9 H5.5 Z" fill="#9be89b" opacity=".7"/></svg>
<span class="t" style="top:343.0px;font-size:12px;line-height:14px;color:#223;font-weight:bold;left:24px;transform-origin:0 50%;">.</span>
<span class="t" style="top:343.0px;font-size:12px;line-height:14px;color:#111;font-weight:bold;left:47px;transform-origin:0 50%;transform:scaleX(0.9000);">...</span>
<span class="t" style="top:343.0px;font-size:12px;line-height:14px;color:#111;font-weight:bold;left:69px;transform-origin:0 50%;transform:scaleX(0.9000);">...</span>
<span class="t" style="top:343.0px;font-size:12px;line-height:14px;color:#111;font-weight:bold;left:91px;transform-origin:0 50%;transform:scaleX(0.9000);">...</span>
<span class="t" style="top:343.0px;font-size:12px;line-height:14px;color:#111;font-weight:bold;left:113px;transform-origin:0 50%;transform:scaleX(0.9000);">...</span>
<div class="r" style="left:4px;top:378px;width:122px;height:1px;background:#dcdcdc;"></div>
<svg style="left:8px;top:363px" width="11" height="11" viewBox="0 0 11 11"><path d="M5.5 10.3 L10.3 5.4 H7.6 V1 H3.4 V5.4 H0.7 Z" fill="#f0713a" stroke="#c04414" stroke-width="1"/><path d="M5.5 8.7 L8 6 H6.6 V2 H5.5 Z" fill="#ffc09a" opacity=".7"/></svg>
<span class="t" style="top:363.0px;font-size:12px;line-height:14px;color:#223;font-weight:bold;left:24px;transform-origin:0 50%;">.</span>
<span class="t" style="top:363.0px;font-size:12px;line-height:14px;color:#b02020;font-weight:bold;left:47px;transform-origin:0 50%;transform:scaleX(0.9000);">...</span>
<span class="t" style="top:363.0px;font-size:12px;line-height:14px;color:#b02020;font-weight:bold;left:69px;transform-origin:0 50%;transform:scaleX(0.9000);">...</span>
<span class="t" style="top:363.0px;font-size:12px;line-height:14px;color:#b02020;font-weight:bold;left:91px;transform-origin:0 50%;transform:scaleX(0.9000);">...</span>
<span class="t" style="top:363.0px;font-size:12px;line-height:14px;color:#b02020;font-weight:bold;left:113px;transform-origin:0 50%;transform:scaleX(0.9000);">...</span>
<div class="r" style="left:4px;top:398px;width:122px;height:1px;background:#dcdcdc;"></div>
<svg style="left:8px;top:383px" width="11" height="11" viewBox="0 0 11 11"><path d="M5.5 0.7 L10.3 5.6 H7.6 V10 H3.4 V5.6 H0.7 Z" fill="#3fc23f" stroke="#1b7d1b" stroke-width="1"/><path d="M5.5 2.3 L8 5 H6.6 V9 H5.5 Z" fill="#9be89b" opacity=".7"/></svg>
<span class="t" style="top:383.0px;font-size:12px;line-height:14px;color:#223;font-weight:bold;left:24px;transform-origin:0 50%;">.</span>
<span class="t" style="top:383.0px;font-size:12px;line-height:14px;color:#111;font-weight:bold;left:47px;transform-origin:0 50%;transform:scaleX(0.9000);">...</span>
<span class="t" style="top:383.0px;font-size:12px;line-height:14px;color:#111;font-weight:bold;left:69px;transform-origin:0 50%;transform:scaleX(0.9000);">...</span>
<span class="t" style="top:383.0px;font-size:12px;line-height:14px;color:#111;font-weight:bold;left:91px;transform-origin:0 50%;transform:scaleX(0.9000);">...</span>
<span class="t" style="top:383.0px;font-size:12px;line-height:14px;color:#111;font-weight:bold;left:113px;transform-origin:0 50%;transform:scaleX(0.9000);">...</span>
<div class="r" style="left:4px;top:418px;width:122px;height:1px;background:#dcdcdc;"></div>
<svg style="left:8px;top:403px" width="11" height="11" viewBox="0 0 11 11"><path d="M5.5 10.3 L10.3 5.4 H7.6 V1 H3.4 V5.4 H0.7 Z" fill="#f0713a" stroke="#c04414" stroke-width="1"/><path d="M5.5 8.7 L8 6 H6.6 V2 H5.5 Z" fill="#ffc09a" opacity=".7"/></svg>
<span class="t" style="top:403.0px;font-size:12px;line-height:14px;color:#223;font-weight:bold;left:24px;transform-origin:0 50%;">.</span>
<span class="t" style="top:403.0px;font-size:12px;line-height:14px;color:#b02020;font-weight:bold;left:47px;transform-origin:0 50%;transform:scaleX(0.9000);">...</span>
<span class="t" style="top:403.0px;font-size:12px;line-height:14px;color:#b02020;font-weight:bold;left:69px;transform-origin:0 50%;transform:scaleX(0.9000);">...</span>
<span class="t" style="top:403.0px;font-size:12px;line-height:14px;color:#b02020;font-weight:bold;left:91px;transform-origin:0 50%;transform:scaleX(0.9000);">...</span>
<span class="t" style="top:403.0px;font-size:12px;line-height:14px;color:#b02020;font-weight:bold;left:113px;transform-origin:0 50%;transform:scaleX(0.9000);">...</span>
<div class="r" style="left:4px;top:438px;width:122px;height:1px;background:#dcdcdc;"></div>
<svg style="left:8px;top:423px" width="11" height="11" viewBox="0 0 11 11"><path d="M5.5 10.3 L10.3 5.4 H7.6 V1 H3.4 V5.4 H0.7 Z" fill="#f0713a" stroke="#c04414" stroke-width="1"/><path d="M5.5 8.7 L8 6 H6.6 V2 H5.5 Z" fill="#ffc09a" opacity=".7"/></svg>
<span class="t" style="top:423.0px;font-size:12px;line-height:14px;color:#223;font-weight:bold;left:24px;transform-origin:0 50%;">.</span>
<span class="t" style="top:423.0px;font-size:12px;line-height:14px;color:#b02020;font-weight:bold;left:47px;transform-origin:0 50%;transform:scaleX(0.9000);">...</span>
<span class="t" style="top:423.0px;font-size:12px;line-height:14px;color:#b02020;font-weight:bold;left:69px;transform-origin:0 50%;transform:scaleX(0.9000);">...</span>
<span class="t" style="top:423.0px;font-size:12px;line-height:14px;color:#b02020;font-weight:bold;left:91px;transform-origin:0 50%;transform:scaleX(0.9000);">...</span>
<span class="t" style="top:423.0px;font-size:12px;line-height:14px;color:#b02020;font-weight:bold;left:113px;transform-origin:0 50%;transform:scaleX(0.9000);">...</span>
<div class="r" style="left:36px;top:199px;width:1px;height:20px;background:#2f8ae6;"></div>
<div class="r" style="left:58px;top:199px;width:1px;height:20px;background:#2f8ae6;"></div>
<div class="r" style="left:80px;top:199px;width:1px;height:20px;background:#2f8ae6;"></div>
<div class="r" style="left:102px;top:199px;width:1px;height:20px;background:#2f8ae6;"></div>
<div class="r" style="left:127px;top:115px;width:17px;height:325px;background:#f0f0f0;"></div>
<div class="r" style="left:127px;top:136px;width:17px;height:28px;background:#cdcdcd;"></div>
<svg style="left:131px;top:121px" width="9" height="8" viewBox="0 0 9 8"><path d="M1 5.500 L4.500 2 L8 5.500" stroke="#505050" stroke-width="1.700" fill="none"/></svg>
<svg style="left:131px;top:428px" width="9" height="8" viewBox="0 0 9 8"><path d="M1 2 L4.500 5.500 L8 2" stroke="#505050" stroke-width="1.700" fill="none"/></svg>
<div class="r" style="left:57px;top:441px;width:87px;height:1px;background:#111;"></div>
<div class="r" style="left:6px;top:441px;width:52px;height:18px;background:#fff;border:1px solid #111;border-top:none;border-bottom-width:2px;border-right-width:2px;"></div>
<span class="t" style="top:444.0px;font-size:11px;line-height:12px;color:#111;left:16px;transform-origin:0 50%;transform:scaleX(0.8750);">Simboli</span>
<span class="t" style="top:445.0px;font-size:11px;line-height:12px;color:#7a7a7a;left:67.5px;transform-origin:0 50%;transform:scaleX(0.9636);">Grafico tick</span>
<div class="r" style="left:131px;top:445px;width:1px;height:12px;background:#777;"></div>
<div class="r" style="left:0px;top:464px;width:148px;height:1px;background:#a8a8a8;"></div>
<div class="r" style="left:0px;top:465px;width:148px;height:1px;background:#fafafa;"></div>
<div class="r" style="left:3px;top:467px;width:128px;height:13px;background:linear-gradient(to right,#c3d3e8 0%,#cfdcec 80%,#dde6f0 100%);"></div>
<span class="t" style="top:467.0px;font-size:11px;line-height:12px;color:#1a2438;left:5.5px;transform-origin:0 50%;transform:scaleX(0.9906);">Navigatore</span>
<svg style="left:134px;top:470px" width="8" height="8" viewBox="0 0 8 8"><path d="M1 1 L7 7 M7 1 L1 7" stroke="#111" stroke-width="1.6"/></svg>
<div class="r" style="left:3px;top:481px;width:142px;height:231px;background:#fff;border:1px solid #9aa0a8;border-bottom:none;"></div>
<div class="r" style="left:17px;top:483px;width:1px;height:229px;background:repeating-linear-gradient(to bottom,#999 0,#999 1px,transparent 1px,transparent 2px);"></div>
<div class="r" style="left:38px;top:483px;width:1px;height:229px;background:repeating-linear-gradient(to bottom,#999 0,#999 1px,transparent 1px,transparent 2px);"></div>
<div class="r" style="left:59px;top:483px;width:1px;height:207px;background:repeating-linear-gradient(to bottom,#999 0,#999 1px,transparent 1px,transparent 2px);"></div>
<div class="r" style="left:60px;top:493px;width:11px;height:1px;background:repeating-linear-gradient(to right,#999 0,#999 1px,transparent 1px,transparent 2px);"></div>
<svg style="left:71px;top:483px" width="19" height="16" viewBox="0 0 19 16"><ellipse cx="9" cy="6.2" rx="8" ry="3.3" fill="#86bdea" stroke="#3f80bc" stroke-width="0.9"/><path d="M4.6 5.4 q0 -4.2 4.4 -4.2 t4.4 4.2 q-4.4 1.8 -8.8 0z" fill="#5aa5e0" stroke="#3f80bc" stroke-width="0.8"/><path d="M4.5 8.8 q4.5 2 9 0 l-1.5 3.6 q-3 1.4 -6 0 z" fill="#f4e08a" stroke="#c9aa3c" stroke-width="0.8"/><path d="M13.600 9.600 l3.200 3.200 l-3.200 3.200 l-3.200 -3.200 z" fill="#b4b4b4" stroke="#666" stroke-width="0.900"/></svg>
<span class="t" style="top:486.0px;font-size:11px;line-height:12px;color:#111;left:94px;transform-origin:0 50%;transform:scaleX(0.9143);">Alex Pr</span>
<div class="r" style="left:60px;top:511px;width:11px;height:1px;background:repeating-linear-gradient(to right,#999 0,#999 1px,transparent 1px,transparent 2px);"></div>
<svg style="left:71px;top:501px" width="19" height="16" viewBox="0 0 19 16"><ellipse cx="9" cy="6.2" rx="8" ry="3.3" fill="#86bdea" stroke="#3f80bc" stroke-width="0.9"/><path d="M4.6 5.4 q0 -4.2 4.4 -4.2 t4.4 4.2 q-4.4 1.8 -8.8 0z" fill="#5aa5e0" stroke="#3f80bc" stroke-width="0.8"/><path d="M4.5 8.8 q4.5 2 9 0 l-1.5 3.6 q-3 1.4 -6 0 z" fill="#f4e08a" stroke="#c9aa3c" stroke-width="0.8"/><path d="M13.600 9.600 l3.200 3.200 l-3.200 3.200 l-3.200 -3.200 z" fill="#b4b4b4" stroke="#666" stroke-width="0.900"/></svg>
<span class="t" style="top:504.0px;font-size:11px;line-height:12px;color:#111;left:94px;transform-origin:0 50%;transform:scaleX(1.0000);">BuyLo</span>
<div class="r" style="left:60px;top:529px;width:11px;height:1px;background:repeating-linear-gradient(to right,#999 0,#999 1px,transparent 1px,transparent 2px);"></div>
<svg style="left:71px;top:519px" width="19" height="16" viewBox="0 0 19 16"><ellipse cx="9" cy="6.2" rx="8" ry="3.3" fill="#86bdea" stroke="#3f80bc" stroke-width="0.9"/><path d="M4.6 5.4 q0 -4.2 4.4 -4.2 t4.4 4.2 q-4.4 1.8 -8.8 0z" fill="#5aa5e0" stroke="#3f80bc" stroke-width="0.8"/><path d="M4.5 8.8 q4.5 2 9 0 l-1.5 3.6 q-3 1.4 -6 0 z" fill="#f4e08a" stroke="#c9aa3c" stroke-width="0.8"/><path d="M13.600 9.600 l3.200 3.200 l-3.200 3.200 l-3.200 -3.200 z" fill="#b4b4b4" stroke="#666" stroke-width="0.900"/></svg>
<span class="t" style="top:522.0px;font-size:11px;line-height:12px;color:#111;left:94px;transform-origin:0 50%;transform:scaleX(1.0345);">Digge</span>
<div class="r" style="left:60px;top:547px;width:11px;height:1px;background:repeating-linear-gradient(to right,#999 0,#999 1px,transparent 1px,transparent 2px);"></div>
<svg style="left:71px;top:537px" width="19" height="16" viewBox="0 0 19 16"><ellipse cx="9" cy="6.2" rx="8" ry="3.3" fill="#86bdea" stroke="#3f80bc" stroke-width="0.9"/><path d="M4.6 5.4 q0 -4.2 4.4 -4.2 t4.4 4.2 q-4.4 1.8 -8.8 0z" fill="#5aa5e0" stroke="#3f80bc" stroke-width="0.8"/><path d="M4.5 8.8 q4.5 2 9 0 l-1.5 3.6 q-3 1.4 -6 0 z" fill="#f4e08a" stroke="#c9aa3c" stroke-width="0.8"/><path d="M13.600 9.600 l3.200 3.200 l-3.200 3.200 l-3.200 -3.200 z" fill="#b4b4b4" stroke="#666" stroke-width="0.900"/></svg>
<span class="t" style="top:540.0px;font-size:11px;line-height:12px;color:#111;left:94px;transform-origin:0 50%;transform:scaleX(0.8611);">EURJP</span>
<div class="r" style="left:60px;top:565px;width:11px;height:1px;background:repeating-linear-gradient(to right,#999 0,#999 1px,transparent 1px,transparent 2px);"></div>
<svg style="left:71px;top:555px" width="19" height="16" viewBox="0 0 19 16"><ellipse cx="9" cy="6.2" rx="8" ry="3.3" fill="#86bdea" stroke="#3f80bc" stroke-width="0.9"/><path d="M4.6 5.4 q0 -4.2 4.4 -4.2 t4.4 4.2 q-4.4 1.8 -8.8 0z" fill="#5aa5e0" stroke="#3f80bc" stroke-width="0.8"/><path d="M4.5 8.8 q4.5 2 9 0 l-1.5 3.6 q-3 1.4 -6 0 z" fill="#f4e08a" stroke="#c9aa3c" stroke-width="0.8"/><path d="M13.600 9.600 l3.200 3.200 l-3.200 3.200 l-3.200 -3.200 z" fill="#b4b4b4" stroke="#666" stroke-width="0.900"/></svg>
<span class="t" style="top:558.0px;font-size:11px;line-height:12px;color:#111;left:94px;transform-origin:0 50%;transform:scaleX(0.9062);">EURO</span>
<div class="r" style="left:60px;top:583px;width:11px;height:1px;background:repeating-linear-gradient(to right,#999 0,#999 1px,transparent 1px,transparent 2px);"></div>
<svg style="left:71px;top:573px" width="19" height="16" viewBox="0 0 19 16"><ellipse cx="9" cy="6.2" rx="8" ry="3.3" fill="#86bdea" stroke="#3f80bc" stroke-width="0.9"/><path d="M4.6 5.4 q0 -4.2 4.4 -4.2 t4.4 4.2 q-4.4 1.8 -8.8 0z" fill="#5aa5e0" stroke="#3f80bc" stroke-width="0.8"/><path d="M4.5 8.8 q4.5 2 9 0 l-1.5 3.6 q-3 1.4 -6 0 z" fill="#f4e08a" stroke="#c9aa3c" stroke-width="0.8"/><path d="M13.600 9.600 l3.200 3.200 l-3.200 3.200 l-3.200 -3.200 z" fill="#b4b4b4" stroke="#666" stroke-width="0.900"/></svg>
<span class="t" style="top:576.0px;font-size:11px;line-height:12px;color:#111;left:94px;transform-origin:0 50%;transform:scaleX(1.0435);">Grail</span>
<div class="r" style="left:60px;top:601px;width:11px;height:1px;background:repeating-linear-gradient(to right,#999 0,#999 1px,transparent 1px,transparent 2px);"></div>
<svg style="left:71px;top:591px" width="19" height="16" viewBox="0 0 19 16"><ellipse cx="9" cy="6.2" rx="8" ry="3.3" fill="#86bdea" stroke="#3f80bc" stroke-width="0.9"/><path d="M4.6 5.4 q0 -4.2 4.4 -4.2 t4.4 4.2 q-4.4 1.8 -8.8 0z" fill="#5aa5e0" stroke="#3f80bc" stroke-width="0.8"/><path d="M4.5 8.8 q4.5 2 9 0 l-1.5 3.6 q-3 1.4 -6 0 z" fill="#f4e08a" stroke="#c9aa3c" stroke-width="0.8"/><path d="M13.600 9.600 l3.200 3.200 l-3.200 3.200 l-3.200 -3.200 z" fill="#b4b4b4" stroke="#666" stroke-width="0.900"/></svg>
<span class="t" style="top:594.0px;font-size:11px;line-height:12px;color:#111;left:94px;transform-origin:0 50%;transform:scaleX(0.8889);">KPipsE</span>
<div class="r" style="left:60px;top:619px;width:11px;height:1px;background:repeating-linear-gradient(to right,#999 0,#999 1px,transparent 1px,transparent 2px);"></div>
<svg style="left:71px;top:609px" width="19" height="16" viewBox="0 0 19 16"><ellipse cx="9" cy="6.2" rx="8" ry="3.3" fill="#86bdea" stroke="#3f80bc" stroke-width="0.9"/><path d="M4.6 5.4 q0 -4.2 4.4 -4.2 t4.4 4.2 q-4.4 1.8 -8.8 0z" fill="#5aa5e0" stroke="#3f80bc" stroke-width="0.8"/><path d="M4.5 8.8 q4.5 2 9 0 l-1.5 3.6 q-3 1.4 -6 0 z" fill="#f4e08a" stroke="#c9aa3c" stroke-width="0.8"/><path d="M13.600 9.600 l3.200 3.200 l-3.200 3.200 l-3.200 -3.200 z" fill="#b4b4b4" stroke="#666" stroke-width="0.900"/></svg>
<span class="t" style="top:612.0px;font-size:11px;line-height:12px;color:#111;left:94px;transform-origin:0 50%;transform:scaleX(0.9032);">LoLFx</span>
<div class="r" style="left:60px;top:637px;width:11px;height:1px;background:repeating-linear-gradient(to right,#999 0,#999 1px,transparent 1px,transparent 2px);"></div>
<svg style="left:71px;top:627px" width="19" height="16" viewBox="0 0 19 16"><ellipse cx="9" cy="6.2" rx="8" ry="3.3" fill="#86bdea" stroke="#3f80bc" stroke-width="0.9"/><path d="M4.6 5.4 q0 -4.2 4.4 -4.2 t4.4 4.2 q-4.4 1.8 -8.8 0z" fill="#5aa5e0" stroke="#3f80bc" stroke-width="0.8"/><path d="M4.5 8.8 q4.5 2 9 0 l-1.5 3.6 q-3 1.4 -6 0 z" fill="#f4e08a" stroke="#c9aa3c" stroke-width="0.8"/><path d="M13.600 9.600 l3.200 3.200 l-3.200 3.200 l-3.200 -3.200 z" fill="#b4b4b4" stroke="#666" stroke-width="0.900"/></svg>
<span class="t" style="top:630.0px;font-size:11px;line-height:12px;color:#111;left:94px;transform-origin:0 50%;transform:scaleX(0.9688);">NRSte</span>
<div class="r" style="left:60px;top:655px;width:11px;height:1px;background:repeating-linear-gradient(to right,#999 0,#999 1px,transparent 1px,transparent 2px);"></div>
<svg style="left:71px;top:645px" width="19" height="16" viewBox="0 0 19 16"><ellipse cx="9" cy="6.2" rx="8" ry="3.3" fill="#86bdea" stroke="#3f80bc" stroke-width="0.9"/><path d="M4.6 5.4 q0 -4.2 4.4 -4.2 t4.4 4.2 q-4.4 1.8 -8.8 0z" fill="#5aa5e0" stroke="#3f80bc" stroke-width="0.8"/><path d="M4.5 8.8 q4.5 2 9 0 l-1.5 3.6 q-3 1.4 -6 0 z" fill="#f4e08a" stroke="#c9aa3c" stroke-width="0.8"/><path d="M13.600 9.600 l3.200 3.200 l-3.200 3.200 l-3.200 -3.200 z" fill="#b4b4b4" stroke="#666" stroke-width="0.900"/></svg>
<span class="t" style="top:648.0px;font-size:11px;line-height:12px;color:#111;left:94px;transform-origin:0 50%;transform:scaleX(1.0000);">Pythor</span>
<div class="r" style="left:60px;top:673px;width:11px;height:1px;background:repeating-linear-gradient(to right,#999 0,#999 1px,transparent 1px,transparent 2px);"></div>
<svg style="left:71px;top:663px" width="19" height="16" viewBox="0 0 19 16"><ellipse cx="9" cy="6.2" rx="8" ry="3.3" fill="#86bdea" stroke="#3f80bc" stroke-width="0.9"/><path d="M4.6 5.4 q0 -4.2 4.4 -4.2 t4.4 4.2 q-4.4 1.8 -8.8 0z" fill="#5aa5e0" stroke="#3f80bc" stroke-width="0.8"/><path d="M4.5 8.8 q4.5 2 9 0 l-1.5 3.6 q-3 1.4 -6 0 z" fill="#f4e08a" stroke="#c9aa3c" stroke-width="0.8"/><path d="M13.600 9.600 l3.200 3.200 l-3.200 3.200 l-3.200 -3.200 z" fill="#b4b4b4" stroke="#666" stroke-width="0.900"/></svg>
<span class="t" style="top:666.0px;font-size:11px;line-height:12px;color:#111;left:94px;transform-origin:0 50%;transform:scaleX(1.0385);">Robo</span>
<div class="r" style="left:60px;top:691px;width:11px;height:1px;background:repeating-linear-gradient(to right,#999 0,#999 1px,transparent 1px,transparent 2px);"></div>
<svg style="left:71px;top:681px" width="19" height="16" viewBox="0 0 19 16"><ellipse cx="9" cy="6.2" rx="8" ry="3.3" fill="#86bdea" stroke="#3f80bc" stroke-width="0.9"/><path d="M4.6 5.4 q0 -4.2 4.4 -4.2 t4.4 4.2 q-4.4 1.8 -8.8 0z" fill="#5aa5e0" stroke="#3f80bc" stroke-width="0.8"/><path d="M4.5 8.8 q4.5 2 9 0 l-1.5 3.6 q-3 1.4 -6 0 z" fill="#f4e08a" stroke="#c9aa3c" stroke-width="0.8"/><path d="M13.600 9.600 l3.200 3.200 l-3.200 3.200 l-3.200 -3.200 z" fill="#b4b4b4" stroke="#666" stroke-width="0.900"/></svg>
<span class="t" style="top:684.0px;font-size:11px;line-height:12px;color:#111;left:94px;transform-origin:0 50%;transform:scaleX(0.9412);">Sensei</span>
<div class="r" style="left:39px;top:709px;width:11px;height:1px;background:repeating-linear-gradient(to right,#999 0,#999 1px,transparent 1px,transparent 2px);"></div>
<svg style="left:50px;top:699px" width="19" height="16" viewBox="0 0 19 16"><ellipse cx="9" cy="6.2" rx="8" ry="3.3" fill="#86bdea" stroke="#3f80bc" stroke-width="0.9"/><path d="M4.6 5.4 q0 -4.2 4.4 -4.2 t4.4 4.2 q-4.4 1.8 -8.8 0z" fill="#5aa5e0" stroke="#3f80bc" stroke-width="0.8"/><path d="M4.5 8.8 q4.5 2 9 0 l-1.5 3.6 q-3 1.4 -6 0 z" fill="#f4e08a" stroke="#c9aa3c" stroke-width="0.8"/><path d="M13.600 9.600 l3.200 3.200 l-3.200 3.200 l-3.200 -3.200 z" fill="#b4b4b4" stroke="#666" stroke-width="0.900"/></svg>
<span class="t" style="top:702.0px;font-size:11px;line-height:12px;color:#111;left:73px;transform-origin:0 50%;transform:scaleX(0.9636);">MACD San</span>
<div class="r" style="left:126px;top:483px;width:1px;height:229px;background:#fff;"></div>
<div class="r" style="left:127px;top:483px;width:17px;height:229px;background:#f0f0f0;"></div>
<div class="r" style="left:127px;top:638px;width:16px;height:43px;background:#cdcdcd;"></div>
<svg style="left:131px;top:488px" width="9" height="8" viewBox="0 0 9 8"><path d="M1 5.500 L4.500 2 L8 5.500" stroke="#505050" stroke-width="1.700" fill="none"/></svg>
<svg style="left:131px;top:700px" width="9" height="8" viewBox="0 0 9 8"><path d="M1 2 L4.500 5.500 L8 2" stroke="#505050" stroke-width="1.700" fill="none"/></svg>
<div class="r" style="left:64px;top:712px;width:80px;height:1px;background:#111;"></div>
<div class="r" style="left:6px;top:712px;width:59px;height:18px;background:#fff;border:1px solid #111;border-top:none;border-bottom-width:2px;border-right-width:2px;"></div>
<span class="t" style="top:715.0px;font-size:11px;line-height:12px;color:#111;left:16px;transform-origin:0 50%;transform:scaleX(0.9048);">Comune</span>
<span class="t" style="top:716.0px;font-size:11px;line-height:12px;color:#7a7a7a;left:74.5px;transform-origin:0 50%;transform:scaleX(0.9868);">Preferiti</span>
<div class="r" style="left:123px;top:716px;width:1px;height:12px;background:#777;"></div>
<div class="r" style="left:0px;top:735px;width:148px;height:1px;background:#8f8f8f;"></div>
<div class="r" style="left:148px;top:99px;width:1772px;height:616px;background:#f0f0f0;"></div>
<div class="r" style="left:148px;top:98px;width:1772px;height:1px;background:#3a3a3a;"></div>
<div class="r" style="left:148px;top:99px;width:1px;height:615px;background:#555;"></div>
<div class="r" style="left:149px;top:99px;width:1770px;height:615px;background:#000;"></div>
<svg style="left:0;top:0" width="1920" height="1080" viewBox="0 0 1920 1080" shape-rendering="crispEdges" fill="none">
<path d="M153.5 156V253M157.5 186V260M159.5 221V254M161.5 200V294M163.5 234V271M173.5 150V230M187.5 175V195M191.5 193V231M193.5 180V242M195.5 188V204M197.5 192V230M199.5 222V260M201.5 222V300M203.5 305V349M205.5 280V372M215.5 338V365M219.5 378V444M221.5 390V427M223.5 385V420M235.5 373V397M243.5 379V396M245.5 401V419M247.5 411V461M249.5 437V458M251.5 447V493M255.5 472V504M257.5 489V544M259.5 490V513M261.5 497V521M263.5 480V530M267.5 488V520M271.5 475V506M273.5 474V508M275.5 470V500M277.5 470V505M279.5 468V491M283.5 465V478M289.5 448V471M291.5 441V460M295.5 434V469M297.5 441V457M305.5 490V560M307.5 545V570M309.5 533V600M313.5 563V584M315.5 544V575M321.5 535V563M323.5 523V546M325.5 510V550M333.5 478V522M337.5 510V536M339.5 515V536M343.5 530V553M347.5 526V553M349.5 529V560M353.5 533V572M363.5 510V536M367.5 501V531M369.5 492V509M373.5 480V515M383.5 448V464M387.5 407V462M389.5 440V490M391.5 448V479M395.5 462V490M397.5 467V511M411.5 424V452M419.5 422V440M421.5 425V465M423.5 431V463M425.5 436V463M427.5 441V474M429.5 444V483M431.5 464V488M437.5 441V472M439.5 444V489M441.5 460V475M443.5 457V483M445.5 470V510M451.5 496V510M453.5 494V528M455.5 499V515M459.5 522V533M463.5 519V541M467.5 522V544M471.5 517V538M473.5 516V532M475.5 512V540M477.5 511V522M483.5 500V533M487.5 503V522M489.5 505V533M491.5 534V553M493.5 533V656M495.5 563V644M497.5 600V670M499.5 622V680M507.5 620V635M515.5 612V645M517.5 618V634M521.5 610V637M529.5 600V633M533.5 591V603M541.5 603V652M543.5 600V678M549.5 577V617M551.5 589V619M555.5 590V612M557.5 585V620M561.5 592V616M567.5 587V616M569.5 592V619M571.5 605V620M577.5 578V640M579.5 577V605M581.5 581V617M589.5 583V603M595.5 582V592M597.5 590V609M599.5 590V604M603.5 600V614M605.5 582V612M613.5 579V592M621.5 530V566M627.5 545V590M629.5 571V602M635.5 575V596M639.5 570V589M645.5 554V569M647.5 545V572M649.5 555V565M651.5 536V556M655.5 537V550M657.5 538V561M659.5 531V562M661.5 543V566M663.5 562V571M665.5 562V584M669.5 575V593M671.5 587V598M673.5 589V611M675.5 560V600M679.5 577V595M685.5 590V620M687.5 589V614M691.5 573V599M695.5 556V567M709.5 498V531M713.5 527V553M715.5 538V555M717.5 516V545M719.5 528V559M723.5 539V553M725.5 549V582M731.5 559V574M737.5 516V536M745.5 445V460M747.5 454V463M749.5 451V469M755.5 443V455M757.5 442V454M759.5 448V462M761.5 445V454M767.5 437V454M773.5 440V470M777.5 462V487M779.5 460V479M783.5 436V462M791.5 382V390M797.5 388V398M803.5 370V389M813.5 362V374M817.5 349V393M819.5 364V382M823.5 391V411M829.5 407V438M841.5 407V429M845.5 421V428M849.5 418V427M851.5 416V430M855.5 417V428M879.5 429V452M883.5 455V476M885.5 456V480M893.5 457V467M899.5 460V476M905.5 448V462M907.5 437V456M909.5 444V451M911.5 456V467M913.5 451V469M915.5 464V478M917.5 469V500M919.5 492V506M923.5 492V511M925.5 460V473M927.5 455V468M929.5 430V465M931.5 428V445M933.5 410V442M935.5 436V450M939.5 440V450M941.5 434V449M943.5 438V451M945.5 438V451M951.5 418V437M955.5 415V426M957.5 430V445M959.5 424V445M961.5 424V451M965.5 390V416M969.5 400V409M971.5 399V415M973.5 402V420M977.5 410V437M979.5 402V440M993.5 278V302M995.5 291V303M997.5 296V327M1017.5 273V283M1021.5 285V311M1025.5 320V360M1027.5 333V347M1033.5 380V440M1035.5 424V469M1037.5 438V464M1045.5 430V443M1053.5 409V424M1055.5 415V425M1057.5 405V426M1059.5 411V426M1067.5 465V475M1069.5 487V511M1071.5 491V519M1073.5 531V571M1075.5 541V563M1079.5 533V553M1081.5 551V558M1085.5 551V564M1091.5 559V566M1095.5 547V557M1099.5 552V561M1101.5 547V576M1105.5 562V602M1111.5 559V581M1113.5 582V611M1115.5 595V609M1121.5 598V629M1131.5 632V647M1135.5 627V639M1139.5 630V645M1141.5 636V661M1147.5 625V637M1149.5 618V647M1153.5 602V658M1157.5 611V642M1159.5 612V626M1175.5 545V558M1177.5 536V571M1181.5 560V580M1183.5 562V573M1185.5 567V583M1187.5 563V585M1193.5 560V577M1197.5 551V576M1201.5 533V554M1203.5 524V571M1213.5 462V504M1221.5 482V518M1223.5 496V522M1235.5 567V588M1239.5 567V589M1241.5 574V582M1243.5 572V587M1245.5 574V585M1251.5 608V630M1257.5 576V620M1263.5 567V610M1269.5 561V579M1277.5 532V561M1279.5 554V571M1285.5 549V569M1291.5 555V573M1293.5 561V571M1295.5 558V575M1297.5 562V591M1299.5 558V574M1305.5 564V582M1309.5 576V612M1313.5 527V589M1335.5 480V497M1347.5 474V492M1349.5 478V529M1351.5 493V517M1353.5 496V530M1355.5 496V539M1357.5 504V558M1361.5 498V531M1369.5 485V508M1383.5 482V492M1385.5 480V496M1387.5 482V490M1389.5 482V504M1391.5 486V501M1395.5 507V527M1397.5 507V536M1399.5 513V533M1401.5 528V546M1403.5 522V558M1405.5 537V558M1407.5 565V580M1409.5 562V600M1419.5 575V587M1421.5 575V587M1423.5 573V586M1425.5 576V589M1427.5 578V587M1435.5 597V604M1437.5 602V611M1439.5 607V627M1451.5 586V604M1453.5 582V604M1455.5 565V576M1461.5 540V564M1463.5 542V559M1465.5 552V564M1467.5 552V567M1469.5 556V573M1471.5 562V569M1481.5 557V572M1483.5 559V573M1485.5 567V580M1487.5 570V580M1489.5 578V586M1491.5 587V594M1493.5 582V598M1495.5 589V599M1499.5 534V593M1505.5 413V469M1507.5 428V472M1509.5 451V513M1515.5 535V550M1523.5 521V536M1527.5 502V515M1531.5 503V528M1535.5 500V523M1537.5 481V523M1543.5 456V488M1547.5 514V525M1549.5 521V549M1551.5 521V537M1553.5 530V555M1555.5 543V563M1557.5 559V581M1561.5 562V573M1565.5 565V572M1567.5 557V566M1569.5 555V568M1575.5 562V582M1577.5 558V574M1579.5 562V581M1581.5 570V582M1585.5 541V564M1589.5 528V553M1595.5 513V536M1597.5 520V542M1601.5 474V536M1611.5 458V474M1613.5 468V475M1615.5 463V472M1617.5 465V474M1627.5 452V474M1629.5 465V472M1631.5 473V491M1633.5 483V523M1635.5 483V511M1637.5 497V518M1639.5 494V513M1645.5 484V517M1647.5 496V515M1651.5 495V524M1655.5 490V507M1661.5 487V510M1663.5 499V507M1665.5 500V510M1669.5 493V500M1675.5 479V492M1677.5 477V495M1689.5 427V458M1693.5 461V507M1695.5 481V506M1699.5 449V474M1701.5 445V468M1703.5 412V439M1705.5 402V478M1707.5 446V469M1709.5 457V471M1713.5 458V465M1717.5 450V473M1719.5 453V471M1725.5 448V456M1727.5 456V466M1731.5 417V444M1735.5 367V402M1739.5 356V389M1747.5 355V371M1749.5 333V374M1753.5 355V372M1755.5 355V362M1761.5 355V362M1775.5 346V357M1777.5 346V361M1779.5 337V366M1781.5 331V355M1787.5 338V354M1789.5 343V359M1793.5 343V369M1801.5 348V366M1805.5 355V367M1807.5 361V374M1809.5 362V369M1811.5 365V375M1813.5 366V384M1815.5 369V378M1817.5 361V379M1819.5 358V373M1821.5 343V367M1827.5 324V342M1835.5 338V350M1843.5 342V359M1845.5 329V355M1847.5 330V347M1849.5 333V344M1853.5 331V341M1857.5 329V342M1861.5 318V337M1865.5 319V335M1869.5 329V338" stroke="#3a120a" stroke-width="3"/>
<path d="M155.5 180V239M165.5 250V300M167.5 264V303M169.5 220V290M171.5 167V280M175.5 170V204M177.5 133V190M179.5 161V189M181.5 135V183M183.5 150V195M185.5 164V200M189.5 170V225M207.5 293V347M209.5 275V358M211.5 336V359M213.5 322V355M217.5 350V389M225.5 386V405M227.5 388V401M229.5 375V400M231.5 376V397M233.5 384V394M237.5 367V396M239.5 358V380M241.5 358V392M253.5 440V500M265.5 487V504M269.5 461V511M281.5 470V486M285.5 467V500M287.5 458V476M293.5 422V461M299.5 472V493M301.5 455V500M303.5 487V540M311.5 539V578M317.5 544V578M319.5 542V572M327.5 506V526M329.5 497V532M331.5 496V532M335.5 489V508M341.5 517V550M345.5 526V551M351.5 536V568M355.5 550V566M357.5 542V558M359.5 518V545M361.5 506V522M365.5 500V539M371.5 484V507M375.5 472V497M377.5 461V489M379.5 458V483M381.5 454V477M385.5 397V478M393.5 468V497M399.5 468V494M401.5 452V485M403.5 440V480M405.5 443V467M407.5 429V453M409.5 417V456M413.5 411V444M415.5 420V448M417.5 427V442M433.5 454V472M435.5 446V468M447.5 472V504M449.5 500V514M457.5 512V532M461.5 510V540M465.5 533V542M469.5 522V536M479.5 519V534M481.5 504V523M485.5 499V514M501.5 625V660M503.5 631V656M505.5 622V650M509.5 633V645M511.5 616V629M513.5 620V645M519.5 611V630M523.5 605V633M525.5 610V622M527.5 602V622M531.5 595V611M535.5 590V625M537.5 585V616M539.5 561V622M545.5 598V652M547.5 600V650M553.5 591V618M559.5 590V616M563.5 584V597M565.5 583V617M573.5 580V625M575.5 594V627M583.5 586V621M585.5 585V615M587.5 593V614M591.5 596V610M593.5 583V611M601.5 582V599M607.5 593V607M609.5 584V602M611.5 581V591M615.5 560V595M617.5 542V577M619.5 527V576M623.5 516V558M625.5 528V553M631.5 570V586M633.5 582V598M637.5 565V595M641.5 558V584M643.5 568V582M653.5 533V558M667.5 568V583M677.5 542V576M681.5 580V615M683.5 611V629M689.5 576V607M693.5 562V575M697.5 544V571M699.5 541V560M701.5 534V546M703.5 522V540M705.5 517V526M707.5 514V526M711.5 513V527M721.5 511V558M727.5 558V582M729.5 551V562M733.5 551V571M735.5 532V547M739.5 470V520M741.5 456V487M743.5 440V464M751.5 453V461M753.5 432V460M763.5 447V462M765.5 439V449M769.5 424V456M771.5 428V454M775.5 455V471M781.5 447V468M785.5 385V460M787.5 384V418M789.5 378V398M793.5 382V402M795.5 379V396M799.5 368V377M801.5 364V389M805.5 369V387M807.5 374V390M809.5 373V391M811.5 373V385M815.5 376V394M821.5 377V399M825.5 407V419M827.5 413V427M831.5 417V441M833.5 416V453M835.5 437V450M837.5 422V444M839.5 424V437M843.5 410V425M847.5 419V432M853.5 416V433M857.5 409V423M859.5 401V420M861.5 405V420M863.5 416V430M865.5 405V435M867.5 408V437M869.5 407V451M871.5 409V432M873.5 405V440M875.5 402V433M877.5 400V438M881.5 442V482M887.5 466V478M889.5 451V478M891.5 463V475M895.5 459V475M897.5 468V478M901.5 457V470M903.5 453V460M921.5 504V535M937.5 433V462M947.5 434V447M949.5 429V439M953.5 413V438M963.5 414V431M967.5 396V412M975.5 402V424M981.5 360V420M983.5 331V398M985.5 290V350M987.5 270V340M989.5 272V312M991.5 283V298M999.5 299V313M1001.5 309V326M1003.5 304V324M1005.5 295V314M1007.5 302V315M1009.5 278V322M1011.5 278V299M1013.5 248V278M1015.5 257V276M1019.5 271V296M1023.5 282V327M1029.5 344V376M1031.5 361V376M1039.5 442V452M1041.5 438V456M1043.5 442V449M1047.5 420V435M1049.5 416V433M1051.5 420V427M1061.5 400V438M1063.5 438V451M1065.5 442V464M1077.5 536V558M1083.5 551V560M1087.5 557V567M1089.5 558V571M1093.5 555V565M1097.5 542V558M1103.5 551V577M1107.5 548V564M1109.5 540V589M1117.5 608V621M1119.5 595V608M1123.5 617V640M1125.5 620V651M1127.5 625V645M1129.5 618V647M1133.5 634V645M1137.5 627V642M1143.5 633V644M1145.5 633V650M1151.5 619V653M1155.5 614V654M1161.5 611V638M1163.5 611V641M1165.5 589V651M1167.5 598V627M1169.5 562V620M1171.5 558V589M1173.5 547V584M1179.5 555V576M1189.5 562V591M1191.5 563V585M1195.5 553V570M1199.5 542V554M1205.5 522V554M1207.5 499V531M1209.5 484V527M1211.5 489V522M1215.5 466V500M1217.5 439V487M1219.5 460V479M1225.5 499V522M1227.5 521V534M1229.5 509V540M1231.5 546V566M1233.5 562V598M1237.5 568V589M1247.5 585V592M1249.5 576V593M1253.5 589V648M1255.5 591V621M1259.5 586V615M1261.5 584V638M1265.5 540V589M1267.5 539V567M1271.5 544V575M1273.5 535V571M1275.5 552V571M1281.5 551V571M1283.5 533V571M1287.5 545V564M1289.5 549V571M1301.5 547V589M1303.5 550V582M1307.5 571V588M1311.5 562V593M1315.5 544V572M1317.5 496V527M1319.5 498V514M1321.5 499V510M1323.5 504V513M1325.5 498V522M1327.5 502V517M1329.5 500V510M1331.5 494V512M1333.5 478V504M1337.5 482V497M1339.5 479V492M1341.5 471V487M1343.5 467V479M1345.5 456V482M1359.5 511V534M1363.5 488V512M1365.5 472V518M1367.5 472V498M1371.5 485V505M1373.5 478V498M1375.5 478V494M1377.5 486V496M1379.5 479V495M1381.5 483V491M1393.5 494V508M1411.5 570V587M1413.5 567V584M1415.5 570V589M1417.5 571V593M1429.5 580V590M1431.5 587V599M1433.5 587V602M1441.5 614V624M1443.5 601V620M1445.5 587V618M1447.5 586V609M1449.5 593V609M1457.5 540V571M1459.5 548V559M1473.5 561V568M1475.5 552V569M1477.5 553V567M1479.5 547V571M1497.5 587V609M1501.5 413V607M1503.5 413V470M1511.5 473V506M1513.5 513V551M1517.5 526V546M1519.5 525V540M1521.5 522V540M1525.5 511V530M1529.5 496V531M1533.5 500V527M1539.5 475V498M1541.5 447V491M1545.5 491V520M1559.5 568V575M1563.5 560V567M1571.5 563V572M1573.5 555V583M1583.5 559V581M1587.5 528V572M1591.5 532V547M1593.5 533V549M1599.5 510V532M1603.5 470V495M1605.5 465V484M1607.5 465V475M1609.5 463V477M1619.5 466V475M1621.5 463V478M1623.5 462V475M1625.5 464V476M1641.5 487V509M1643.5 466V504M1649.5 474V538M1653.5 487V512M1657.5 497V509M1659.5 486V500M1667.5 499V507M1671.5 488V502M1673.5 481V504M1679.5 474V494M1681.5 423V474M1683.5 439V459M1685.5 418V455M1687.5 419V432M1691.5 453V476M1697.5 458V500M1711.5 457V464M1715.5 444V461M1721.5 451V461M1723.5 452V465M1729.5 380V461M1733.5 377V418M1737.5 356V397M1741.5 343V384M1743.5 348V376M1745.5 355V393M1751.5 355V368M1757.5 359V372M1759.5 359V371M1763.5 345V364M1765.5 348V361M1767.5 352V359M1769.5 346V356M1771.5 346V353M1773.5 348V357M1783.5 322V355M1785.5 344V357M1791.5 348V358M1795.5 347V357M1797.5 342V358M1799.5 344V357M1803.5 358V365M1823.5 345V356M1825.5 305V348M1829.5 325V351M1831.5 329V359M1833.5 327V350M1837.5 317V351M1839.5 331V362M1841.5 330V371M1851.5 327V345M1855.5 333V343M1859.5 326V337M1863.5 323V337M1867.5 327V334M1871.5 329V336" stroke="#0c380c" stroke-width="3"/>
<path d="M153.5 156V253M157.5 186V260M159.5 221V254M161.5 200V294M163.5 234V271M173.5 150V230M187.5 175V195M191.5 193V231M193.5 180V242M195.5 188V204M197.5 192V230M199.5 222V260M201.5 222V300M203.5 305V349M205.5 280V372M215.5 338V365M219.5 378V444M221.5 390V427M223.5 385V420M235.5 373V397M243.5 379V396M245.5 401V419M247.5 411V461M249.5 437V458M251.5 447V493M255.5 472V504M257.5 489V544M259.5 490V513M261.5 497V521M263.5 480V530M267.5 488V520M271.5 475V506M273.5 474V508M275.5 470V500M277.5 470V505M279.5 468V491M283.5 465V478M289.5 448V471M291.5 441V460M295.5 434V469M297.5 441V457M305.5 490V560M307.5 545V570M309.5 533V600M313.5 563V584M315.5 544V575M321.5 535V563M323.5 523V546M325.5 510V550M333.5 478V522M337.5 510V536M339.5 515V536M343.5 530V553M347.5 526V553M349.5 529V560M353.5 533V572M363.5 510V536M367.5 501V531M369.5 492V509M373.5 480V515M383.5 448V464M387.5 407V462M389.5 440V490M391.5 448V479M395.5 462V490M397.5 467V511M411.5 424V452M419.5 422V440M421.5 425V465M423.5 431V463M425.5 436V463M427.5 441V474M429.5 444V483M431.5 464V488M437.5 441V472M439.5 444V489M441.5 460V475M443.5 457V483M445.5 470V510M451.5 496V510M453.5 494V528M455.5 499V515M459.5 522V533M463.5 519V541M467.5 522V544M471.5 517V538M473.5 516V532M475.5 512V540M477.5 511V522M483.5 500V533M487.5 503V522M489.5 505V533M491.5 534V553M493.5 533V656M495.5 563V644M497.5 600V670M499.5 622V680M507.5 620V635M515.5 612V645M517.5 618V634M521.5 610V637M529.5 600V633M533.5 591V603M541.5 603V652M543.5 600V678M549.5 577V617M551.5 589V619M555.5 590V612M557.5 585V620M561.5 592V616M567.5 587V616M569.5 592V619M571.5 605V620M577.5 578V640M579.5 577V605M581.5 581V617M589.5 583V603M595.5 582V592M597.5 590V609M599.5 590V604M603.5 600V614M605.5 582V612M613.5 579V592M621.5 530V566M627.5 545V590M629.5 571V602M635.5 575V596M639.5 570V589M645.5 554V569M647.5 545V572M649.5 555V565M651.5 536V556M655.5 537V550M657.5 538V561M659.5 531V562M661.5 543V566M663.5 562V571M665.5 562V584M669.5 575V593M671.5 587V598M673.5 589V611M675.5 560V600M679.5 577V595M685.5 590V620M687.5 589V614M691.5 573V599M695.5 556V567M709.5 498V531M713.5 527V553M715.5 538V555M717.5 516V545M719.5 528V559M723.5 539V553M725.5 549V582M731.5 559V574M737.5 516V536M745.5 445V460M747.5 454V463M749.5 451V469M755.5 443V455M757.5 442V454M759.5 448V462M761.5 445V454M767.5 437V454M773.5 440V470M777.5 462V487M779.5 460V479M783.5 436V462M791.5 382V390M797.5 388V398M803.5 370V389M813.5 362V374M817.5 349V393M819.5 364V382M823.5 391V411M829.5 407V438M841.5 407V429M845.5 421V428M849.5 418V427M851.5 416V430M855.5 417V428M879.5 429V452M883.5 455V476M885.5 456V480M893.5 457V467M899.5 460V476M905.5 448V462M907.5 437V456M909.5 444V451M911.5 456V467M913.5 451V469M915.5 464V478M917.5 469V500M919.5 492V506M923.5 492V511M925.5 460V473M927.5 455V468M929.5 430V465M931.5 428V445M933.5 410V442M935.5 436V450M939.5 440V450M941.5 434V449M943.5 438V451M945.5 438V451M951.5 418V437M955.5 415V426M957.5 430V445M959.5 424V445M961.5 424V451M965.5 390V416M969.5 400V409M971.5 399V415M973.5 402V420M977.5 410V437M979.5 402V440M993.5 278V302M995.5 291V303M997.5 296V327M1017.5 273V283M1021.5 285V311M1025.5 320V360M1027.5 333V347M1033.5 380V440M1035.5 424V469M1037.5 438V464M1045.5 430V443M1053.5 409V424M1055.5 415V425M1057.5 405V426M1059.5 411V426M1067.5 465V475M1069.5 487V511M1071.5 491V519M1073.5 531V571M1075.5 541V563M1079.5 533V553M1081.5 551V558M1085.5 551V564M1091.5 559V566M1095.5 547V557M1099.5 552V561M1101.5 547V576M1105.5 562V602M1111.5 559V581M1113.5 582V611M1115.5 595V609M1121.5 598V629M1131.5 632V647M1135.5 627V639M1139.5 630V645M1141.5 636V661M1147.5 625V637M1149.5 618V647M1153.5 602V658M1157.5 611V642M1159.5 612V626M1175.5 545V558M1177.5 536V571M1181.5 560V580M1183.5 562V573M1185.5 567V583M1187.5 563V585M1193.5 560V577M1197.5 551V576M1201.5 533V554M1203.5 524V571M1213.5 462V504M1221.5 482V518M1223.5 496V522M1235.5 567V588M1239.5 567V589M1241.5 574V582M1243.5 572V587M1245.5 574V585M1251.5 608V630M1257.5 576V620M1263.5 567V610M1269.5 561V579M1277.5 532V561M1279.5 554V571M1285.5 549V569M1291.5 555V573M1293.5 561V571M1295.5 558V575M1297.5 562V591M1299.5 558V574M1305.5 564V582M1309.5 576V612M1313.5 527V589M1335.5 480V497M1347.5 474V492M1349.5 478V529M1351.5 493V517M1353.5 496V530M1355.5 496V539M1357.5 504V558M1361.5 498V531M1369.5 485V508M1383.5 482V492M1385.5 480V496M1387.5 482V490M1389.5 482V504M1391.5 486V501M1395.5 507V527M1397.5 507V536M1399.5 513V533M1401.5 528V546M1403.5 522V558M1405.5 537V558M1407.5 565V580M1409.5 562V600M1419.5 575V587M1421.5 575V587M1423.5 573V586M1425.5 576V589M1427.5 578V587M1435.5 597V604M1437.5 602V611M1439.5 607V627M1451.5 586V604M1453.5 582V604M1455.5 565V576M1461.5 540V564M1463.5 542V559M1465.5 552V564M1467.5 552V567M1469.5 556V573M1471.5 562V569M1481.5 557V572M1483.5 559V573M1485.5 567V580M1487.5 570V580M1489.5 578V586M1491.5 587V594M1493.5 582V598M1495.5 589V599M1499.5 534V593M1505.5 413V469M1507.5 428V472M1509.5 451V513M1515.5 535V550M1523.5 521V536M1527.5 502V515M1531.5 503V528M1535.5 500V523M1537.5 481V523M1543.5 456V488M1547.5 514V525M1549.5 521V549M1551.5 521V537M1553.5 530V555M1555.5 543V563M1557.5 559V581M1561.5 562V573M1565.5 565V572M1567.5 557V566M1569.5 555V568M1575.5 562V582M1577.5 558V574M1579.5 562V581M1581.5 570V582M1585.5 541V564M1589.5 528V553M1595.5 513V536M1597.5 520V542M1601.5 474V536M1611.5 458V474M1613.5 468V475M1615.5 463V472M1617.5 465V474M1627.5 452V474M1629.5 465V472M1631.5 473V491M1633.5 483V523M1635.5 483V511M1637.5 497V518M1639.5 494V513M1645.5 484V517M1647.5 496V515M1651.5 495V524M1655.5 490V507M1661.5 487V510M1663.5 499V507M1665.5 500V510M1669.5 493V500M1675.5 479V492M1677.5 477V495M1689.5 427V458M1693.5 461V507M1695.5 481V506M1699.5 449V474M1701.5 445V468M1703.5 412V439M1705.5 402V478M1707.5 446V469M1709.5 457V471M1713.5 458V465M1717.5 450V473M1719.5 453V471M1725.5 448V456M1727.5 456V466M1731.5 417V444M1735.5 367V402M1739.5 356V389M1747.5 355V371M1749.5 333V374M1753.5 355V372M1755.5 355V362M1761.5 355V362M1775.5 346V357M1777.5 346V361M1779.5 337V366M1781.5 331V355M1787.5 338V354M1789.5 343V359M1793.5 343V369M1801.5 348V366M1805.5 355V367M1807.5 361V374M1809.5 362V369M1811.5 365V375M1813.5 366V384M1815.5 369V378M1817.5 361V379M1819.5 358V373M1821.5 343V367M1827.5 324V342M1835.5 338V350M1843.5 342V359M1845.5 329V355M1847.5 330V347M1849.5 333V344M1853.5 331V341M1857.5 329V342M1861.5 318V337M1865.5 319V335M1869.5 329V338" stroke="#ea8464" stroke-width="1"/>
<path d="M155.5 180V239M165.5 250V300M167.5 264V303M169.5 220V290M171.5 167V280M175.5 170V204M177.5 133V190M179.5 161V189M181.5 135V183M183.5 150V195M185.5 164V200M189.5 170V225M207.5 293V347M209.5 275V358M211.5 336V359M213.5 322V355M217.5 350V389M225.5 386V405M227.5 388V401M229.5 375V400M231.5 376V397M233.5 384V394M237.5 367V396M239.5 358V380M241.5 358V392M253.5 440V500M265.5 487V504M269.5 461V511M281.5 470V486M285.5 467V500M287.5 458V476M293.5 422V461M299.5 472V493M301.5 455V500M303.5 487V540M311.5 539V578M317.5 544V578M319.5 542V572M327.5 506V526M329.5 497V532M331.5 496V532M335.5 489V508M341.5 517V550M345.5 526V551M351.5 536V568M355.5 550V566M357.5 542V558M359.5 518V545M361.5 506V522M365.5 500V539M371.5 484V507M375.5 472V497M377.5 461V489M379.5 458V483M381.5 454V477M385.5 397V478M393.5 468V497M399.5 468V494M401.5 452V485M403.5 440V480M405.5 443V467M407.5 429V453M409.5 417V456M413.5 411V444M415.5 420V448M417.5 427V442M433.5 454V472M435.5 446V468M447.5 472V504M449.5 500V514M457.5 512V532M461.5 510V540M465.5 533V542M469.5 522V536M479.5 519V534M481.5 504V523M485.5 499V514M501.5 625V660M503.5 631V656M505.5 622V650M509.5 633V645M511.5 616V629M513.5 620V645M519.5 611V630M523.5 605V633M525.5 610V622M527.5 602V622M531.5 595V611M535.5 590V625M537.5 585V616M539.5 561V622M545.5 598V652M547.5 600V650M553.5 591V618M559.5 590V616M563.5 584V597M565.5 583V617M573.5 580V625M575.5 594V627M583.5 586V621M585.5 585V615M587.5 593V614M591.5 596V610M593.5 583V611M601.5 582V599M607.5 593V607M609.5 584V602M611.5 581V591M615.5 560V595M617.5 542V577M619.5 527V576M623.5 516V558M625.5 528V553M631.5 570V586M633.5 582V598M637.5 565V595M641.5 558V584M643.5 568V582M653.5 533V558M667.5 568V583M677.5 542V576M681.5 580V615M683.5 611V629M689.5 576V607M693.5 562V575M697.5 544V571M699.5 541V560M701.5 534V546M703.5 522V540M705.5 517V526M707.5 514V526M711.5 513V527M721.5 511V558M727.5 558V582M729.5 551V562M733.5 551V571M735.5 532V547M739.5 470V520M741.5 456V487M743.5 440V464M751.5 453V461M753.5 432V460M763.5 447V462M765.5 439V449M769.5 424V456M771.5 428V454M775.5 455V471M781.5 447V468M785.5 385V460M787.5 384V418M789.5 378V398M793.5 382V402M795.5 379V396M799.5 368V377M801.5 364V389M805.5 369V387M807.5 374V390M809.5 373V391M811.5 373V385M815.5 376V394M821.5 377V399M825.5 407V419M827.5 413V427M831.5 417V441M833.5 416V453M835.5 437V450M837.5 422V444M839.5 424V437M843.5 410V425M847.5 419V432M853.5 416V433M857.5 409V423M859.5 401V420M861.5 405V420M863.5 416V430M865.5 405V435M867.5 408V437M869.5 407V451M871.5 409V432M873.5 405V440M875.5 402V433M877.5 400V438M881.5 442V482M887.5 466V478M889.5 451V478M891.5 463V475M895.5 459V475M897.5 468V478M901.5 457V470M903.5 453V460M921.5 504V535M937.5 433V462M947.5 434V447M949.5 429V439M953.5 413V438M963.5 414V431M967.5 396V412M975.5 402V424M981.5 360V420M983.5 331V398M985.5 290V350M987.5 270V340M989.5 272V312M991.5 283V298M999.5 299V313M1001.5 309V326M1003.5 304V324M1005.5 295V314M1007.5 302V315M1009.5 278V322M1011.5 278V299M1013.5 248V278M1015.5 257V276M1019.5 271V296M1023.5 282V327M1029.5 344V376M1031.5 361V376M1039.5 442V452M1041.5 438V456M1043.5 442V449M1047.5 420V435M1049.5 416V433M1051.5 420V427M1061.5 400V438M1063.5 438V451M1065.5 442V464M1077.5 536V558M1083.5 551V560M1087.5 557V567M1089.5 558V571M1093.5 555V565M1097.5 542V558M1103.5 551V577M1107.5 548V564M1109.5 540V589M1117.5 608V621M1119.5 595V608M1123.5 617V640M1125.5 620V651M1127.5 625V645M1129.5 618V647M1133.5 634V645M1137.5 627V642M1143.5 633V644M1145.5 633V650M1151.5 619V653M1155.5 614V654M1161.5 611V638M1163.5 611V641M1165.5 589V651M1167.5 598V627M1169.5 562V620M1171.5 558V589M1173.5 547V584M1179.5 555V576M1189.5 562V591M1191.5 563V585M1195.5 553V570M1199.5 542V554M1205.5 522V554M1207.5 499V531M1209.5 484V527M1211.5 489V522M1215.5 466V500M1217.5 439V487M1219.5 460V479M1225.5 499V522M1227.5 521V534M1229.5 509V540M1231.5 546V566M1233.5 562V598M1237.5 568V589M1247.5 585V592M1249.5 576V593M1253.5 589V648M1255.5 591V621M1259.5 586V615M1261.5 584V638M1265.5 540V589M1267.5 539V567M1271.5 544V575M1273.5 535V571M1275.5 552V571M1281.5 551V571M1283.5 533V571M1287.5 545V564M1289.5 549V571M1301.5 547V589M1303.5 550V582M1307.5 571V588M1311.5 562V593M1315.5 544V572M1317.5 496V527M1319.5 498V514M1321.5 499V510M1323.5 504V513M1325.5 498V522M1327.5 502V517M1329.5 500V510M1331.5 494V512M1333.5 478V504M1337.5 482V497M1339.5 479V492M1341.5 471V487M1343.5 467V479M1345.5 456V482M1359.5 511V534M1363.5 488V512M1365.5 472V518M1367.5 472V498M1371.5 485V505M1373.5 478V498M1375.5 478V494M1377.5 486V496M1379.5 479V495M1381.5 483V491M1393.5 494V508M1411.5 570V587M1413.5 567V584M1415.5 570V589M1417.5 571V593M1429.5 580V590M1431.5 587V599M1433.5 587V602M1441.5 614V624M1443.5 601V620M1445.5 587V618M1447.5 586V609M1449.5 593V609M1457.5 540V571M1459.5 548V559M1473.5 561V568M1475.5 552V569M1477.5 553V567M1479.5 547V571M1497.5 587V609M1501.5 413V607M1503.5 413V470M1511.5 473V506M1513.5 513V551M1517.5 526V546M1519.5 525V540M1521.5 522V540M1525.5 511V530M1529.5 496V531M1533.5 500V527M1539.5 475V498M1541.5 447V491M1545.5 491V520M1559.5 568V575M1563.5 560V567M1571.5 563V572M1573.5 555V583M1583.5 559V581M1587.5 528V572M1591.5 532V547M1593.5 533V549M1599.5 510V532M1603.5 470V495M1605.5 465V484M1607.5 465V475M1609.5 463V477M1619.5 466V475M1621.5 463V478M1623.5 462V475M1625.5 464V476M1641.5 487V509M1643.5 466V504M1649.5 474V538M1653.5 487V512M1657.5 497V509M1659.5 486V500M1667.5 499V507M1671.5 488V502M1673.5 481V504M1679.5 474V494M1681.5 423V474M1683.5 439V459M1685.5 418V455M1687.5 419V432M1691.5 453V476M1697.5 458V500M1711.5 457V464M1715.5 444V461M1721.5 451V461M1723.5 452V465M1729.5 380V461M1733.5 377V418M1737.5 356V397M1741.5 343V384M1743.5 348V376M1745.5 355V393M1751.5 355V368M1757.5 359V372M1759.5 359V371M1763.5 345V364M1765.5 348V361M1767.5 352V359M1769.5 346V356M1771.5 346V353M1773.5 348V357M1783.5 322V355M1785.5 344V357M1791.5 348V358M1795.5 347V357M1797.5 342V358M1799.5 344V357M1803.5 358V365M1823.5 345V356M1825.5 305V348M1829.5 325V351M1831.5 329V359M1833.5 327V350M1837.5 317V351M1839.5 331V362M1841.5 330V371M1851.5 327V345M1855.5 333V343M1859.5 326V337M1863.5 323V337M1867.5 327V334M1871.5 329V336" stroke="#80d880" stroke-width="1"/>
<path d="M153 294.5H1875" stroke="#cf3030" stroke-width="1" stroke-dasharray="9 6 3 6" stroke-dashoffset="1.5"/>
<path d="M153 317.5H1875" stroke="#9fc79f" stroke-width="1" stroke-dasharray="9 6 3 6" stroke-dashoffset="1.5"/>
<path d="M153 331.5H1875" stroke="#c09a50" stroke-width="1" stroke-dasharray="9 6 3 6" stroke-dashoffset="1.5"/>
<path d="M153 336.5H1875" stroke="#d42c2c" stroke-width="1" stroke-dasharray="9 6 3 6" stroke-dashoffset="1.5"/>
<path d="M153 340.5H1875" stroke="#d42c2c" stroke-width="1" stroke-dasharray="9 6 3 6" stroke-dashoffset="1.5"/>
<path d="M153 328.5H1875" stroke="#62dd62" stroke-width="1"/>
<path d="M152.5 101V697 M152 101.5H1876 M1875.5 101V697 M152 696.5H1876" stroke="#fff" stroke-width="1"/>
<path d="M152.5 697V700M216.5 697V700M280.5 697V700M344.5 697V700M408.5 697V700M472.5 697V700M536.5 697V700M600.5 697V700M664.5 697V700M728.5 697V700M792.5 697V700M856.5 697V700M920.5 697V700M984.5 697V700M1048.5 697V700M1112.5 697V700M1176.5 697V700M1240.5 697V700M1304.5 697V700M1368.5 697V700M1432.5 697V700M1496.5 697V700M1560.5 697V700M1624.5 697V700M1688.5 697V700M1752.5 697V700M1816.5 697V700" stroke="#fff" stroke-width="1"/>
<path d="M1876 132.5h2M1876 165.5h2M1876 198.5h2M1876 231.5h2M1876 264.5h2M1876 297.5h2M1876 363.5h2M1876 396.5h2M1876 429.5h2M1876 462.5h2M1876 495.5h2M1876 528.5h2M1876 561.5h2M1876 594.5h2M1876 627.5h2M1876 660.5h2M1876 693.5h2" stroke="#fff" stroke-width="1"/>
</svg>
<svg style="left:155px;top:107px" width="8" height="6" viewBox="0 0 8 6"><path d="M0 0 H7 L3.5 5 Z" fill="#fff"/></svg>
<span class="t" style="top:105.0px;font-size:9px;line-height:10px;color:#f2f2f2;left:167px;transform-origin:0 50%;transform:scaleX(1.0276);">EURUSDmicro,H1  1.13881 1.13893 1.13881 1.13886</span>
<span class="t" style="top:118.0px;font-size:9px;line-height:10px;color:#f2f2f2;left:156.5px;transform-origin:0 50%;transform:scaleX(1.0654);">CurTime=08:00  quantity=10  steps=30  steps_sell=20  TakeProfit=25  Lots=0.10</span>
<span class="t" style="top:130.0px;font-size:9px;line-height:10px;color:#f2f2f2;left:157px;transform-origin:0 50%;transform:scaleX(1.0200);">+------------------------------+</span>
<span class="t" style="top:142.0px;font-size:9px;line-height:10px;color:#f2f2f2;left:165px;transform-origin:0 50%;transform:scaleX(1.0432);">STOPLEVEL=40.0     max_STOPLEVEL=40.0</span>
<span class="t" style="top:154.0px;font-size:9px;line-height:10px;color:#f2f2f2;left:165px;transform-origin:0 50%;transform:scaleX(1.0610);">SPREAD=17.0     max_SPREAD=17.0     min_SPREAD=17.0</span>
<span class="t" style="top:166.0px;font-size:9px;line-height:10px;color:#f2f2f2;left:165px;transform-origin:0 50%;transform:scaleX(1.0308);">Balance=835.59</span>
<span class="t" style="top:178.0px;font-size:9px;line-height:10px;color:#f2f2f2;left:165px;transform-origin:0 50%;transform:scaleX(1.0635);">Equity=1263.94</span>
<span class="t" style="top:190.0px;font-size:9px;line-height:10px;color:#f2f2f2;left:165px;transform-origin:0 50%;transform:scaleX(1.0606);">Profit=428.350 $</span>
<span class="t" style="top:202.0px;font-size:9px;line-height:10px;color:#f2f2f2;left:165px;transform-origin:0 50%;transform:scaleX(1.0938);">Profit=51.263 %</span>
<span class="t" style="top:214.0px;font-size:9px;line-height:10px;color:#f2f2f2;left:165px;transform-origin:0 50%;transform:scaleX(1.0159);">Leverage 1:200</span>
<span class="t" style="top:226.0px;font-size:9px;line-height:10px;color:#f2f2f2;left:165px;transform-origin:0 50%;transform:scaleX(1.0444);">min_Lot=0.01     max_Lot=100.00</span>
<span class="t" style="top:284.0px;font-size:9px;line-height:10px;color:#f2f2f2;left:159px;transform-origin:0 50%;transform:scaleX(1.0364);">#62280780 tp</span>
<span class="t" style="top:307.0px;font-size:9px;line-height:10px;color:#f2f2f2;left:159px;transform-origin:0 50%;transform:scaleX(1.0343);">#62280780 buy stop 0.01</span>
<span class="t" style="top:320.0px;font-size:9px;line-height:10px;color:#f2f2f2;left:159px;transform-origin:0 50%;transform:scaleX(1.0247);">#62280775 sell 0.50</span>
<span class="t" style="top:330.0px;font-size:9px;line-height:10px;color:#f2f2f2;left:159px;transform-origin:0 50%;transform:scaleX(1.0370);">#62280788 sl</span>
<span class="t" style="top:106.0px;font-size:9px;line-height:10px;color:#f2f2f2;left:1802px;transform-origin:0 50%;transform:scaleX(1.0000);">Robo Grid FX</span>
<svg style="left:1858px;top:105.2px" width="13" height="13" viewBox="0 0 13 13"><circle cx="6.5" cy="6.5" r="5.3" fill="none" stroke="#fff" stroke-width="1"/><circle cx="4.6" cy="5" r="0.8" fill="#fff"/><circle cx="8.4" cy="5" r="0.8" fill="#fff"/><path d="M3.8 7.6 q2.7 2.6 5.4 0" stroke="#fff" stroke-width="1" fill="none"/></svg>
<span class="t" style="top:127.0px;font-size:9px;line-height:10px;color:#f2f2f2;left:1881.5px;transform-origin:0 50%;transform:scaleX(0.9788);">1.15595</span>
<span class="t" style="top:160.0px;font-size:9px;line-height:10px;color:#f2f2f2;left:1881.5px;transform-origin:0 50%;transform:scaleX(0.9788);">1.15310</span>
<span class="t" style="top:193.0px;font-size:9px;line-height:10px;color:#f2f2f2;left:1881.5px;transform-origin:0 50%;transform:scaleX(0.9788);">1.15025</span>
<span class="t" style="top:226.0px;font-size:9px;line-height:10px;color:#f2f2f2;left:1881.5px;transform-origin:0 50%;transform:scaleX(0.9788);">1.14740</span>
<span class="t" style="top:259.0px;font-size:9px;line-height:10px;color:#f2f2f2;left:1881.5px;transform-origin:0 50%;transform:scaleX(0.9788);">1.14455</span>
<span class="t" style="top:292.0px;font-size:9px;line-height:10px;color:#f2f2f2;left:1881.5px;transform-origin:0 50%;transform:scaleX(0.9788);">1.14170</span>
<span class="t" style="top:358.0px;font-size:9px;line-height:10px;color:#f2f2f2;left:1881.5px;transform-origin:0 50%;transform:scaleX(0.9788);">1.13605</span>
<span class="t" style="top:391.0px;font-size:9px;line-height:10px;color:#f2f2f2;left:1881.5px;transform-origin:0 50%;transform:scaleX(0.9788);">1.13320</span>
<span class="t" style="top:424.0px;font-size:9px;line-height:10px;color:#f2f2f2;left:1881.5px;transform-origin:0 50%;transform:scaleX(0.9788);">1.13035</span>
<span class="t" style="top:457.0px;font-size:9px;line-height:10px;color:#f2f2f2;left:1881.5px;transform-origin:0 50%;transform:scaleX(0.9788);">1.12750</span>
<span class="t" style="top:490.0px;font-size:9px;line-height:10px;color:#f2f2f2;left:1881.5px;transform-origin:0 50%;transform:scaleX(0.9788);">1.12465</span>
<span class="t" style="top:523.0px;font-size:9px;line-height:10px;color:#f2f2f2;left:1881.5px;transform-origin:0 50%;transform:scaleX(0.9788);">1.12180</span>
<span class="t" style="top:556.0px;font-size:9px;line-height:10px;color:#f2f2f2;left:1881.5px;transform-origin:0 50%;transform:scaleX(1.0094);">1.11895</span>
<span class="t" style="top:589.0px;font-size:9px;line-height:10px;color:#f2f2f2;left:1881.5px;transform-origin:0 50%;transform:scaleX(1.0094);">1.11615</span>
<span class="t" style="top:622.0px;font-size:9px;line-height:10px;color:#f2f2f2;left:1881.5px;transform-origin:0 50%;transform:scaleX(1.0094);">1.11330</span>
<span class="t" style="top:655.0px;font-size:9px;line-height:10px;color:#f2f2f2;left:1881.5px;transform-origin:0 50%;transform:scaleX(1.0094);">1.11045</span>
<span class="t" style="top:688.0px;font-size:9px;line-height:10px;color:#f2f2f2;left:1881.5px;transform-origin:0 50%;transform:scaleX(0.9788);">1.10760</span>
<div class="r" style="left:1877px;top:322px;width:42px;height:3px;background:#35d535;"></div>
<div class="r" style="left:1877px;top:325px;width:42px;height:10px;background:#f01414;"></div>
<span class="t" style="top:325.0px;font-size:9px;line-height:10px;color:#7a0a0a;left:1882px;transform-origin:0 50%;transform:scaleX(0.9848);">1.13889</span>
<span class="t" style="top:701.0px;font-size:9px;line-height:10px;color:#f2f2f2;left:151px;transform-origin:0 50%;transform:scaleX(1.0392);">25 Aug 2015</span>
<span class="t" style="top:701.0px;font-size:9px;line-height:10px;color:#f2f2f2;left:215px;transform-origin:0 50%;transform:scaleX(1.0472);">26 Aug 21:00</span>
<span class="t" style="top:701.0px;font-size:9px;line-height:10px;color:#f2f2f2;left:279px;transform-origin:0 50%;transform:scaleX(1.0472);">28 Aug 05:00</span>
<span class="t" style="top:701.0px;font-size:9px;line-height:10px;color:#f2f2f2;left:343px;transform-origin:0 50%;transform:scaleX(1.0472);">31 Aug 13:00</span>
<span class="t" style="top:701.0px;font-size:9px;line-height:10px;color:#f2f2f2;left:407px;transform-origin:0 50%;transform:scaleX(1.0204);">1 Sep 21:00</span>
<span class="t" style="top:701.0px;font-size:9px;line-height:10px;color:#f2f2f2;left:471px;transform-origin:0 50%;transform:scaleX(1.0204);">3 Sep 05:00</span>
<span class="t" style="top:701.0px;font-size:9px;line-height:10px;color:#f2f2f2;left:535px;transform-origin:0 50%;transform:scaleX(1.0204);">4 Sep 13:00</span>
<span class="t" style="top:701.0px;font-size:9px;line-height:10px;color:#f2f2f2;left:599px;transform-origin:0 50%;transform:scaleX(1.0204);">7 Sep 21:00</span>
<span class="t" style="top:701.0px;font-size:9px;line-height:10px;color:#f2f2f2;left:663px;transform-origin:0 50%;transform:scaleX(1.0204);">9 Sep 05:00</span>
<span class="t" style="top:701.0px;font-size:9px;line-height:10px;color:#f2f2f2;left:727px;transform-origin:0 50%;transform:scaleX(1.0278);">10 Sep 13:00</span>
<span class="t" style="top:701.0px;font-size:9px;line-height:10px;color:#f2f2f2;left:791px;transform-origin:0 50%;transform:scaleX(1.0472);">11 Sep 21:00</span>
<span class="t" style="top:701.0px;font-size:9px;line-height:10px;color:#f2f2f2;left:855px;transform-origin:0 50%;transform:scaleX(1.0278);">15 Sep 05:00</span>
<span class="t" style="top:701.0px;font-size:9px;line-height:10px;color:#f2f2f2;left:919px;transform-origin:0 50%;transform:scaleX(1.0278);">16 Sep 13:00</span>
<span class="t" style="top:701.0px;font-size:9px;line-height:10px;color:#f2f2f2;left:983px;transform-origin:0 50%;transform:scaleX(1.0278);">17 Sep 21:00</span>
<span class="t" style="top:701.0px;font-size:9px;line-height:10px;color:#f2f2f2;left:1047px;transform-origin:0 50%;transform:scaleX(1.0278);">21 Sep 05:00</span>
<span class="t" style="top:701.0px;font-size:9px;line-height:10px;color:#f2f2f2;left:1111px;transform-origin:0 50%;transform:scaleX(1.0278);">22 Sep 13:00</span>
<span class="t" style="top:701.0px;font-size:9px;line-height:10px;color:#f2f2f2;left:1175px;transform-origin:0 50%;transform:scaleX(1.0278);">23 Sep 21:00</span>
<span class="t" style="top:701.0px;font-size:9px;line-height:10px;color:#f2f2f2;left:1239px;transform-origin:0 50%;transform:scaleX(1.0278);">25 Sep 05:00</span>
<span class="t" style="top:701.0px;font-size:9px;line-height:10px;color:#f2f2f2;left:1303px;transform-origin:0 50%;transform:scaleX(1.0278);">28 Sep 13:00</span>
<span class="t" style="top:701.0px;font-size:9px;line-height:10px;color:#f2f2f2;left:1367px;transform-origin:0 50%;transform:scaleX(1.0278);">29 Sep 21:00</span>
<span class="t" style="top:701.0px;font-size:9px;line-height:10px;color:#f2f2f2;left:1431px;transform-origin:0 50%;transform:scaleX(1.0638);">1 Oct 05:00</span>
<span class="t" style="top:701.0px;font-size:9px;line-height:10px;color:#f2f2f2;left:1495px;transform-origin:0 50%;transform:scaleX(1.0638);">2 Oct 13:00</span>
<span class="t" style="top:701.0px;font-size:9px;line-height:10px;color:#f2f2f2;left:1559px;transform-origin:0 50%;transform:scaleX(1.0638);">5 Oct 21:00</span>
<span class="t" style="top:701.0px;font-size:9px;line-height:10px;color:#f2f2f2;left:1623px;transform-origin:0 50%;transform:scaleX(1.0638);">7 Oct 05:00</span>
<span class="t" style="top:701.0px;font-size:9px;line-height:10px;color:#f2f2f2;left:1687px;transform-origin:0 50%;transform:scaleX(1.0638);">8 Oct 13:00</span>
<span class="t" style="top:701.0px;font-size:9px;line-height:10px;color:#f2f2f2;left:1751px;transform-origin:0 50%;transform:scaleX(1.0638);">9 Oct 21:00</span>
<span class="t" style="top:701.0px;font-size:9px;line-height:10px;color:#f2f2f2;left:1815px;transform-origin:0 50%;transform:scaleX(1.0673);">13 Oct 05:00</span>
<div class="r" style="left:147px;top:714px;width:1773px;height:26px;background:#f0f0f0;"></div>
<div class="r" style="left:147px;top:716px;width:1773px;height:1px;background:#111;"></div>
<div class="r" style="left:147px;top:716px;width:1px;height:19px;background:#555;"></div>
<div class="r" style="left:130px;top:734px;width:18px;height:1px;background:#555;"></div>
<span class="t" style="top:720.0px;font-size:10px;line-height:11px;color:#757575;left:161px;transform-origin:0 50%;transform:scaleX(1.0294);">GOLDmicro,H1</span>
<div class="r" style="left:242px;top:719px;width:1px;height:13px;background:#6a6a6a;"></div>
<span class="t" style="top:720.0px;font-size:10px;line-height:11px;color:#757575;left:253px;transform-origin:0 50%;transform:scaleX(1.0274);">GER30Cash,M1</span>
<div class="r" style="left:339px;top:719px;width:1px;height:13px;background:#6a6a6a;"></div>
<span class="t" style="top:720.0px;font-size:10px;line-height:11px;color:#757575;left:350px;transform-origin:0 50%;transform:scaleX(1.0580);">OIL-NOV15,M5</span>
<div class="r" style="left:434px;top:719px;width:1px;height:13px;background:#6a6a6a;"></div>
<span class="t" style="top:720.0px;font-size:10px;line-height:11px;color:#757575;left:446px;transform-origin:0 50%;transform:scaleX(1.0294);">EURUSDmicro,Weekly</span>
<div class="r" style="left:562px;top:719px;width:1px;height:13px;background:#6a6a6a;"></div>
<span class="t" style="top:720.0px;font-size:10px;line-height:11px;color:#757575;left:574px;transform-origin:0 50%;transform:scaleX(1.0109);">EURUSDmicro,Daily</span>
<div class="r" style="left:678px;top:719px;width:1px;height:13px;background:#6a6a6a;"></div>
<span class="t" style="top:720.0px;font-size:10px;line-height:11px;color:#757575;left:689px;transform-origin:0 50%;transform:scaleX(1.0122);">EURUSDmicro,H1</span>
<div class="r" style="left:783px;top:719px;width:1px;height:13px;background:#6a6a6a;"></div>
<span class="t" style="top:720.0px;font-size:10px;line-height:11px;color:#757575;left:794px;transform-origin:0 50%;transform:scaleX(1.0109);">EURUSDmicro,Daily</span>
<div class="r" style="left:898px;top:719px;width:1px;height:13px;background:#6a6a6a;"></div>
<span class="t" style="top:720.0px;font-size:10px;line-height:11px;color:#757575;left:910px;transform-origin:0 50%;transform:scaleX(1.0294);">EURUSDmicro,Weekly</span>
<div class="r" style="left:1026px;top:719px;width:1px;height:13px;background:#6a6a6a;"></div>
<span class="t" style="top:720.0px;font-size:10px;line-height:11px;color:#757575;left:1037px;transform-origin:0 50%;transform:scaleX(1.0122);">EURUSDmicro,H1</span>
<div class="r" style="left:1130px;top:719px;width:1px;height:13px;background:#6a6a6a;"></div>
<span class="t" style="top:720.0px;font-size:10px;line-height:11px;color:#757575;left:1141px;transform-origin:0 50%;transform:scaleX(1.0122);">EURUSDmicro,H1</span>
<div class="r" style="left:1234px;top:719px;width:1px;height:13px;background:#6a6a6a;"></div>
<span class="t" style="top:720.0px;font-size:10px;line-height:11px;color:#757575;left:1245px;transform-origin:0 50%;transform:scaleX(1.0112);">EURJPYmicro,Daily</span>
<div class="r" style="left:1346px;top:719px;width:1px;height:13px;background:#6a6a6a;"></div>
<span class="t" style="top:720.0px;font-size:10px;line-height:11px;color:#757575;left:1357px;transform-origin:0 50%;transform:scaleX(1.0122);">EURUSDmicro,H1</span>
<div class="r" style="left:1450px;top:719px;width:1px;height:13px;background:#6a6a6a;"></div>
<span class="t" style="top:720.0px;font-size:10px;line-height:11px;color:#757575;left:1461px;transform-origin:0 50%;transform:scaleX(1.0122);">NZDUSDmicro,H1</span>
<div class="r" style="left:1555px;top:714px;width:105px;height:21px;background:#fff;border:1px solid #111;border-top:none;border-bottom-width:1px;border-right-width:2px;"></div>
<div class="r" style="left:1556px;top:735px;width:104px;height:1px;background:#555;"></div>
<span class="t" style="top:720.0px;font-size:10px;line-height:11px;color:#111;left:1565px;transform-origin:0 50%;transform:scaleX(1.0122);">EURUSDmicro,H1</span>
<svg style="left:1890px;top:722px" width="24" height="8" viewBox="0 0 24 8"><path d="M5.500 0.500 V7.500 L1.500 4 Z M19 0.500 V7.500 L23 4 Z" fill="#8c8c8c"/></svg>
<div class="r" style="left:0px;top:737px;width:1920px;height:282px;background:#f0f0f0;"></div>
<div class="r" style="left:0px;top:740px;width:1918px;height:1px;background:#a8a8a8;"></div>
<div class="r" style="left:16px;top:741px;width:1900px;height:255px;background:#fff;"></div>
<div class="r" style="left:16px;top:741px;width:1883px;height:24px;background:linear-gradient(to bottom,#ffffff,#f7f8fa);"></div>
<div class="r" style="left:175px;top:741px;width:1px;height:24px;background:#e3e6ea;"></div>
<span class="t" style="top:747.0px;font-size:11px;line-height:12px;color:#111;left:22px;transform-origin:0 50%;transform:scaleX(1.0526);">Data/Orario</span>
<span class="t" style="top:747.0px;font-size:11px;line-height:12px;color:#111;left:182px;transform-origin:0 50%;transform:scaleX(1.0377);">Messaggio</span>
<svg style="left:3px;top:742px" width="9" height="9" viewBox="0 0 9 9"><path d="M1.5 1.5 L7.5 7.5 M7.5 1.5 L1.5 7.5" stroke="#111" stroke-width="1.7"/></svg>
<div class="r" style="left:1px;top:754px;width:13px;height:262px;background:linear-gradient(to bottom,#c9d8ea 0%,#b0c8e4 40%,#9fbadb 100%);"></div>
<span class="t" style="left:1px;top:1013px;font-size:11px;line-height:14px;color:#1c2a48;transform-origin:0 0;transform:rotate(-90deg);">Terminale</span>
<div class="r" style="left:16px;top:764px;width:1883px;height:231px;overflow:hidden;">
<div class="r" style="left:0px;top:1px;width:1883px;height:20px;background:#ebebeb;"></div>
<div class="r" style="left:0px;top:20px;width:1883px;height:1px;background:#cfcfcf;"></div>
<div class="r" style="left:158px;top:1px;width:1px;height:20px;background:#d2d2d2;"></div>
<div class="r" style="left:6px;top:7px;width:7px;height:7px;border-radius:50%;background:radial-gradient(circle at 40% 35%,#c9c9c9,#8e8e8e 70%);border:1px solid #7b7b7b;"></div>
<div class="r" style="left:0px;top:40px;width:1883px;height:1px;background:#cfcfcf;"></div>
<div class="r" style="left:158px;top:21px;width:1px;height:20px;background:#d2d2d2;"></div>
<div class="r" style="left:6px;top:27px;width:7px;height:7px;border-radius:50%;background:radial-gradient(circle at 40% 35%,#c9c9c9,#8e8e8e 70%);border:1px solid #7b7b7b;"></div>
<div class="r" style="left:0px;top:41px;width:1883px;height:20px;background:#ebebeb;"></div>
<div class="r" style="left:0px;top:60px;width:1883px;height:1px;background:#cfcfcf;"></div>
<div class="r" style="left:158px;top:41px;width:1px;height:20px;background:#d2d2d2;"></div>
<div class="r" style="left:6px;top:47px;width:7px;height:7px;border-radius:50%;background:radial-gradient(circle at 40% 35%,#c9c9c9,#8e8e8e 70%);border:1px solid #7b7b7b;"></div>
<div class="r" style="left:0px;top:80px;width:1883px;height:1px;background:#cfcfcf;"></div>
<div class="r" style="left:158px;top:61px;width:1px;height:20px;background:#d2d2d2;"></div>
<div class="r" style="left:6px;top:67px;width:7px;height:7px;border-radius:50%;background:radial-gradient(circle at 40% 35%,#c9c9c9,#8e8e8e 70%);border:1px solid #7b7b7b;"></div>
<div class="r" style="left:0px;top:81px;width:1883px;height:20px;background:#ebebeb;"></div>
<div class="r" style="left:0px;top:100px;width:1883px;height:1px;background:#cfcfcf;"></div>
<div class="r" style="left:158px;top:81px;width:1px;height:20px;background:#d2d2d2;"></div>
<div class="r" style="left:6px;top:87px;width:7px;height:7px;border-radius:50%;background:radial-gradient(circle at 40% 35%,#c9c9c9,#8e8e8e 70%);border:1px solid #7b7b7b;"></div>
<div class="r" style="left:0px;top:120px;width:1883px;height:1px;background:#cfcfcf;"></div>
<div class="r" style="left:158px;top:101px;width:1px;height:20px;background:#d2d2d2;"></div>
<div class="r" style="left:6px;top:107px;width:7px;height:7px;border-radius:50%;background:radial-gradient(circle at 40% 35%,#c9c9c9,#8e8e8e 70%);border:1px solid #7b7b7b;"></div>
<div class="r" style="left:0px;top:121px;width:1883px;height:20px;background:#ebebeb;"></div>
<div class="r" style="left:0px;top:140px;width:1883px;height:1px;background:#cfcfcf;"></div>
<div class="r" style="left:158px;top:121px;width:1px;height:20px;background:#d2d2d2;"></div>
<div class="r" style="left:6px;top:127px;width:7px;height:7px;border-radius:50%;background:radial-gradient(circle at 40% 35%,#c9c9c9,#8e8e8e 70%);border:1px solid #7b7b7b;"></div>
<div class="r" style="left:0px;top:160px;width:1883px;height:1px;background:#cfcfcf;"></div>
<div class="r" style="left:158px;top:141px;width:1px;height:20px;background:#d2d2d2;"></div>
<div class="r" style="left:6px;top:147px;width:7px;height:7px;border-radius:50%;background:radial-gradient(circle at 40% 35%,#c9c9c9,#8e8e8e 70%);border:1px solid #7b7b7b;"></div>
<div class="r" style="left:0px;top:161px;width:1883px;height:20px;background:#ebebeb;"></div>
<div class="r" style="left:0px;top:180px;width:1883px;height:1px;background:#cfcfcf;"></div>
<div class="r" style="left:158px;top:161px;width:1px;height:20px;background:#d2d2d2;"></div>
<div class="r" style="left:6px;top:167px;width:7px;height:7px;border-radius:50%;background:radial-gradient(circle at 40% 35%,#c9c9c9,#8e8e8e 70%);border:1px solid #7b7b7b;"></div>
<div class="r" style="left:0px;top:200px;width:1883px;height:1px;background:#cfcfcf;"></div>
<div class="r" style="left:158px;top:181px;width:1px;height:20px;background:#d2d2d2;"></div>
<div class="r" style="left:6px;top:187px;width:7px;height:7px;border-radius:50%;background:radial-gradient(circle at 40% 35%,#c9c9c9,#8e8e8e 70%);border:1px solid #7b7b7b;"></div>
<div class="r" style="left:0px;top:201px;width:1883px;height:20px;background:#ebebeb;"></div>
<div class="r" style="left:0px;top:220px;width:1883px;height:1px;background:#cfcfcf;"></div>
<div class="r" style="left:158px;top:201px;width:1px;height:20px;background:#d2d2d2;"></div>
<div class="r" style="left:6px;top:207px;width:7px;height:7px;border-radius:50%;background:radial-gradient(circle at 40% 35%,#c9c9c9,#8e8e8e 70%);border:1px solid #7b7b7b;"></div>
<div class="r" style="left:0px;top:240px;width:1883px;height:1px;background:#cfcfcf;"></div>
<div class="r" style="left:158px;top:221px;width:1px;height:20px;background:#d2d2d2;"></div>
<div class="r" style="left:6px;top:227px;width:7px;height:7px;border-radius:50%;background:radial-gradient(circle at 40% 35%,#c9c9c9,#8e8e8e 70%);border:1px solid #7b7b7b;"></div>
</div>
<div class="r" style="left:16px;top:765px;width:1883px;height:1px;background:#c4c8cc;"></div>
<span class="t" style="top:769.0px;font-size:11px;line-height:12px;color:#1a1a1a;left:38.5px;transform-origin:0 50%;transform:scaleX(0.9795);">2015.10.14 07:01:12.369</span>
<span class="t" style="top:769.0px;font-size:11px;line-height:12px;color:#1a1a1a;left:180px;transform-origin:0 50%;transform:scaleX(0.9860);">Robo Grid FX EURUSDmicro,H1:</span>
<span class="t" style="top:769.0px;font-size:11px;line-height:12px;color:#1a1a1a;left:345px;transform-origin:0 50%;transform:scaleX(1.0250);">Ask=0.0</span>
<span class="t" style="top:769.0px;font-size:11px;line-height:12px;color:#1a1a1a;left:392.3px;transform-origin:0 50%;transform:scaleX(1.0526);">Bid=0.0</span>
<span class="t" style="top:769.0px;font-size:11px;line-height:12px;color:#1a1a1a;left:438.3px;transform-origin:0 50%;transform:scaleX(0.9714);">sy=EURUSDmicro</span>
<span class="t" style="top:769.0px;font-size:11px;line-height:12px;color:#1a1a1a;left:533.3px;transform-origin:0 50%;transform:scaleX(1.0519);">ll=0.1</span>
<span class="t" style="top:769.0px;font-size:11px;line-height:12px;color:#1a1a1a;left:568.7px;transform-origin:0 50%;transform:scaleX(1.0524);">op=Buy Stop</span>
<span class="t" style="top:769.0px;font-size:11px;line-height:12px;color:#1a1a1a;left:642.3px;transform-origin:0 50%;transform:scaleX(1.0033);">pp=1.139989999999945</span>
<span class="t" style="top:769.0px;font-size:11px;line-height:12px;color:#1a1a1a;left:769.3px;transform-origin:0 50%;transform:scaleX(0.9948);">sl=1.139369999999945</span>
<span class="t" style="top:769.0px;font-size:11px;line-height:12px;color:#1a1a1a;left:890px;transform-origin:0 50%;transform:scaleX(1.0060);">tp=1.140239999999945</span>
<span class="t" style="top:769.0px;font-size:11px;line-height:12px;color:#1a1a1a;left:1014.3px;transform-origin:0 50%;transform:scaleX(1.0056);">mn=28081975</span>
<span class="t" style="top:789.0px;font-size:11px;line-height:12px;color:#1a1a1a;left:38.5px;transform-origin:0 50%;transform:scaleX(0.9795);">2015.10.14 07:01:12.369</span>
<span class="t" style="top:789.0px;font-size:11px;line-height:12px;color:#1a1a1a;left:180px;transform-origin:0 50%;transform:scaleX(0.9860);">Robo Grid FX EURUSDmicro,H1:</span>
<span class="t" style="top:789.0px;font-size:11px;line-height:12px;color:#1a1a1a;left:345px;transform-origin:0 50%;transform:scaleX(0.9696);">Error(5020)</span>
<span class="t" style="top:789.0px;font-size:11px;line-height:12px;color:#1a1a1a;left:403.3px;transform-origin:0 50%;transform:scaleX(1.0537);">set order: file does not exist, try 3</span>
<span class="t" style="top:809.0px;font-size:11px;line-height:12px;color:#1a1a1a;left:38.5px;transform-origin:0 50%;transform:scaleX(0.9795);">2015.10.14 07:01:04.659</span>
<span class="t" style="top:809.0px;font-size:11px;line-height:12px;color:#1a1a1a;left:180px;transform-origin:0 50%;transform:scaleX(0.9860);">Robo Grid FX EURUSDmicro,H1:</span>
<span class="t" style="top:809.0px;font-size:11px;line-height:12px;color:#1a1a1a;left:345px;transform-origin:0 50%;transform:scaleX(1.0250);">Ask=0.0</span>
<span class="t" style="top:809.0px;font-size:11px;line-height:12px;color:#1a1a1a;left:392.3px;transform-origin:0 50%;transform:scaleX(1.0526);">Bid=0.0</span>
<span class="t" style="top:809.0px;font-size:11px;line-height:12px;color:#1a1a1a;left:438.3px;transform-origin:0 50%;transform:scaleX(0.9714);">sy=EURUSDmicro</span>
<span class="t" style="top:809.0px;font-size:11px;line-height:12px;color:#1a1a1a;left:533.3px;transform-origin:0 50%;transform:scaleX(1.0519);">ll=0.1</span>
<span class="t" style="top:809.0px;font-size:11px;line-height:12px;color:#1a1a1a;left:568.7px;transform-origin:0 50%;transform:scaleX(1.0524);">op=Buy Stop</span>
<span class="t" style="top:809.0px;font-size:11px;line-height:12px;color:#1a1a1a;left:642.3px;transform-origin:0 50%;transform:scaleX(1.0033);">pp=1.139989999999945</span>
<span class="t" style="top:809.0px;font-size:11px;line-height:12px;color:#1a1a1a;left:769.3px;transform-origin:0 50%;transform:scaleX(0.9948);">sl=1.139369999999945</span>
<span class="t" style="top:809.0px;font-size:11px;line-height:12px;color:#1a1a1a;left:890px;transform-origin:0 50%;transform:scaleX(1.0060);">tp=1.140239999999945</span>
<span class="t" style="top:809.0px;font-size:11px;line-height:12px;color:#1a1a1a;left:1014.3px;transform-origin:0 50%;transform:scaleX(1.0056);">mn=28081975</span>
<span class="t" style="top:829.0px;font-size:11px;line-height:12px;color:#1a1a1a;left:38.5px;transform-origin:0 50%;transform:scaleX(0.9795);">2015.10.14 07:01:04.659</span>
<span class="t" style="top:829.0px;font-size:11px;line-height:12px;color:#1a1a1a;left:180px;transform-origin:0 50%;transform:scaleX(0.9860);">Robo Grid FX EURUSDmicro,H1:</span>
<span class="t" style="top:829.0px;font-size:11px;line-height:12px;color:#1a1a1a;left:345px;transform-origin:0 50%;transform:scaleX(0.9696);">Error(5020)</span>
<span class="t" style="top:829.0px;font-size:11px;line-height:12px;color:#1a1a1a;left:403.3px;transform-origin:0 50%;transform:scaleX(1.0537);">set order: file does not exist, try 2</span>
<span class="t" style="top:849.0px;font-size:11px;line-height:12px;color:#1a1a1a;left:38.5px;transform-origin:0 50%;transform:scaleX(0.9795);">2015.10.14 07:00:56.950</span>
<span class="t" style="top:849.0px;font-size:11px;line-height:12px;color:#1a1a1a;left:180px;transform-origin:0 50%;transform:scaleX(0.9860);">Robo Grid FX EURUSDmicro,H1:</span>
<span class="t" style="top:849.0px;font-size:11px;line-height:12px;color:#1a1a1a;left:345px;transform-origin:0 50%;transform:scaleX(1.0250);">Ask=0.0</span>
<span class="t" style="top:849.0px;font-size:11px;line-height:12px;color:#1a1a1a;left:392.3px;transform-origin:0 50%;transform:scaleX(1.0526);">Bid=0.0</span>
<span class="t" style="top:849.0px;font-size:11px;line-height:12px;color:#1a1a1a;left:438.3px;transform-origin:0 50%;transform:scaleX(0.9714);">sy=EURUSDmicro</span>
<span class="t" style="top:849.0px;font-size:11px;line-height:12px;color:#1a1a1a;left:533.3px;transform-origin:0 50%;transform:scaleX(1.0519);">ll=0.1</span>
<span class="t" style="top:849.0px;font-size:11px;line-height:12px;color:#1a1a1a;left:568.7px;transform-origin:0 50%;transform:scaleX(1.0524);">op=Buy Stop</span>
<span class="t" style="top:849.0px;font-size:11px;line-height:12px;color:#1a1a1a;left:642.3px;transform-origin:0 50%;transform:scaleX(1.0033);">pp=1.139989999999945</span>
<span class="t" style="top:849.0px;font-size:11px;line-height:12px;color:#1a1a1a;left:769.3px;transform-origin:0 50%;transform:scaleX(0.9948);">sl=1.139369999999945</span>
<span class="t" style="top:849.0px;font-size:11px;line-height:12px;color:#1a1a1a;left:890px;transform-origin:0 50%;transform:scaleX(1.0060);">tp=1.140239999999945</span>
<span class="t" style="top:849.0px;font-size:11px;line-height:12px;color:#1a1a1a;left:1014.3px;transform-origin:0 50%;transform:scaleX(1.0056);">mn=28081975</span>
<span class="t" style="top:869.0px;font-size:11px;line-height:12px;color:#1a1a1a;left:38.5px;transform-origin:0 50%;transform:scaleX(0.9795);">2015.10.14 07:00:56.950</span>
<span class="t" style="top:869.0px;font-size:11px;line-height:12px;color:#1a1a1a;left:180px;transform-origin:0 50%;transform:scaleX(0.9860);">Robo Grid FX EURUSDmicro,H1:</span>
<span class="t" style="top:869.0px;font-size:11px;line-height:12px;color:#1a1a1a;left:345px;transform-origin:0 50%;transform:scaleX(0.9696);">Error(5020)</span>
<span class="t" style="top:869.0px;font-size:11px;line-height:12px;color:#1a1a1a;left:403.3px;transform-origin:0 50%;transform:scaleX(1.0537);">set order: file does not exist, try 1</span>
<span class="t" style="top:889.0px;font-size:11px;line-height:12px;color:#1a1a1a;left:38.5px;transform-origin:0 50%;transform:scaleX(0.9795);">2015.10.14 07:00:49.240</span>
<span class="t" style="top:889.0px;font-size:11px;line-height:12px;color:#1a1a1a;left:180px;transform-origin:0 50%;transform:scaleX(0.9860);">Robo Grid FX EURUSDmicro,H1:</span>
<span class="t" style="top:889.0px;font-size:11px;line-height:12px;color:#1a1a1a;left:345px;transform-origin:0 50%;transform:scaleX(1.0250);">Ask=0.0</span>
<span class="t" style="top:889.0px;font-size:11px;line-height:12px;color:#1a1a1a;left:392.3px;transform-origin:0 50%;transform:scaleX(1.0526);">Bid=0.0</span>
<span class="t" style="top:889.0px;font-size:11px;line-height:12px;color:#1a1a1a;left:438.3px;transform-origin:0 50%;transform:scaleX(0.9714);">sy=EURUSDmicro</span>
<span class="t" style="top:889.0px;font-size:11px;line-height:12px;color:#1a1a1a;left:533.3px;transform-origin:0 50%;transform:scaleX(1.0519);">ll=0.1</span>
<span class="t" style="top:889.0px;font-size:11px;line-height:12px;color:#1a1a1a;left:568.7px;transform-origin:0 50%;transform:scaleX(1.0524);">op=Buy Stop</span>
<span class="t" style="top:889.0px;font-size:11px;line-height:12px;color:#1a1a1a;left:642.3px;transform-origin:0 50%;transform:scaleX(1.0033);">pp=1.139689999999945</span>
<span class="t" style="top:889.0px;font-size:11px;line-height:12px;color:#1a1a1a;left:769.3px;transform-origin:0 50%;transform:scaleX(0.9948);">sl=1.139069999999945</span>
<span class="t" style="top:889.0px;font-size:11px;line-height:12px;color:#1a1a1a;left:890px;transform-origin:0 50%;transform:scaleX(1.0060);">tp=1.139939999999945</span>
<span class="t" style="top:889.0px;font-size:11px;line-height:12px;color:#1a1a1a;left:1014.3px;transform-origin:0 50%;transform:scaleX(1.0056);">mn=28081975</span>
<span class="t" style="top:909.0px;font-size:11px;line-height:12px;color:#1a1a1a;left:38.5px;transform-origin:0 50%;transform:scaleX(0.9795);">2015.10.14 07:00:49.240</span>
<span class="t" style="top:909.0px;font-size:11px;line-height:12px;color:#1a1a1a;left:180px;transform-origin:0 50%;transform:scaleX(0.9860);">Robo Grid FX EURUSDmicro,H1:</span>
<span class="t" style="top:909.0px;font-size:11px;line-height:12px;color:#1a1a1a;left:345px;transform-origin:0 50%;transform:scaleX(0.9696);">Error(5020)</span>
<span class="t" style="top:909.0px;font-size:11px;line-height:12px;color:#1a1a1a;left:403.3px;transform-origin:0 50%;transform:scaleX(1.0537);">set order: file does not exist, try 5</span>
<span class="t" style="top:929.0px;font-size:11px;line-height:12px;color:#1a1a1a;left:38.5px;transform-origin:0 50%;transform:scaleX(0.9795);">2015.10.14 07:00:41.531</span>
<span class="t" style="top:929.0px;font-size:11px;line-height:12px;color:#1a1a1a;left:180px;transform-origin:0 50%;transform:scaleX(0.9860);">Robo Grid FX EURUSDmicro,H1:</span>
<span class="t" style="top:929.0px;font-size:11px;line-height:12px;color:#1a1a1a;left:345px;transform-origin:0 50%;transform:scaleX(1.0250);">Ask=0.0</span>
<span class="t" style="top:929.0px;font-size:11px;line-height:12px;color:#1a1a1a;left:392.3px;transform-origin:0 50%;transform:scaleX(1.0526);">Bid=0.0</span>
<span class="t" style="top:929.0px;font-size:11px;line-height:12px;color:#1a1a1a;left:438.3px;transform-origin:0 50%;transform:scaleX(0.9714);">sy=EURUSDmicro</span>
<span class="t" style="top:929.0px;font-size:11px;line-height:12px;color:#1a1a1a;left:533.3px;transform-origin:0 50%;transform:scaleX(1.0519);">ll=0.1</span>
<span class="t" style="top:929.0px;font-size:11px;line-height:12px;color:#1a1a1a;left:568.7px;transform-origin:0 50%;transform:scaleX(1.0524);">op=Buy Stop</span>
<span class="t" style="top:929.0px;font-size:11px;line-height:12px;color:#1a1a1a;left:642.3px;transform-origin:0 50%;transform:scaleX(1.0033);">pp=1.139689999999945</span>
<span class="t" style="top:929.0px;font-size:11px;line-height:12px;color:#1a1a1a;left:769.3px;transform-origin:0 50%;transform:scaleX(0.9948);">sl=1.139069999999945</span>
<span class="t" style="top:929.0px;font-size:11px;line-height:12px;color:#1a1a1a;left:890px;transform-origin:0 50%;transform:scaleX(1.0060);">tp=1.139939999999945</span>
<span class="t" style="top:929.0px;font-size:11px;line-height:12px;color:#1a1a1a;left:1014.3px;transform-origin:0 50%;transform:scaleX(1.0056);">mn=28081975</span>
<span class="t" style="top:949.0px;font-size:11px;line-height:12px;color:#1a1a1a;left:38.5px;transform-origin:0 50%;transform:scaleX(0.9795);">2015.10.14 07:00:41.531</span>
<span class="t" style="top:949.0px;font-size:11px;line-height:12px;color:#1a1a1a;left:180px;transform-origin:0 50%;transform:scaleX(0.9860);">Robo Grid FX EURUSDmicro,H1:</span>
<span class="t" style="top:949.0px;font-size:11px;line-height:12px;color:#1a1a1a;left:345px;transform-origin:0 50%;transform:scaleX(0.9696);">Error(5020)</span>
<span class="t" style="top:949.0px;font-size:11px;line-height:12px;color:#1a1a1a;left:403.3px;transform-origin:0 50%;transform:scaleX(1.0537);">set order: file does not exist, try 4</span>
<span class="t" style="top:969.0px;font-size:11px;line-height:12px;color:#1a1a1a;left:38.5px;transform-origin:0 50%;transform:scaleX(0.9795);">2015.10.14 07:00:33.822</span>
<span class="t" style="top:969.0px;font-size:11px;line-height:12px;color:#1a1a1a;left:180px;transform-origin:0 50%;transform:scaleX(0.9860);">Robo Grid FX EURUSDmicro,H1:</span>
<span class="t" style="top:969.0px;font-size:11px;line-height:12px;color:#1a1a1a;left:345px;transform-origin:0 50%;transform:scaleX(1.0250);">Ask=0.0</span>
<span class="t" style="top:969.0px;font-size:11px;line-height:12px;color:#1a1a1a;left:392.3px;transform-origin:0 50%;transform:scaleX(1.0526);">Bid=0.0</span>
<span class="t" style="top:969.0px;font-size:11px;line-height:12px;color:#1a1a1a;left:438.3px;transform-origin:0 50%;transform:scaleX(0.9714);">sy=EURUSDmicro</span>
<span class="t" style="top:969.0px;font-size:11px;line-height:12px;color:#1a1a1a;left:533.3px;transform-origin:0 50%;transform:scaleX(1.0519);">ll=0.1</span>
<span class="t" style="top:969.0px;font-size:11px;line-height:12px;color:#1a1a1a;left:568.7px;transform-origin:0 50%;transform:scaleX(1.0524);">op=Buy Stop</span>
<span class="t" style="top:969.0px;font-size:11px;line-height:12px;color:#1a1a1a;left:642.3px;transform-origin:0 50%;transform:scaleX(1.0033);">pp=1.139689999999945</span>
<span class="t" style="top:969.0px;font-size:11px;line-height:12px;color:#1a1a1a;left:769.3px;transform-origin:0 50%;transform:scaleX(0.9948);">sl=1.139069999999945</span>
<span class="t" style="top:969.0px;font-size:11px;line-height:12px;color:#1a1a1a;left:890px;transform-origin:0 50%;transform:scaleX(1.0060);">tp=1.139939999999945</span>
<span class="t" style="top:969.0px;font-size:11px;line-height:12px;color:#1a1a1a;left:1014.3px;transform-origin:0 50%;transform:scaleX(1.0056);">mn=28081975</span>
<span class="t" style="top:989.0px;font-size:11px;line-height:12px;color:#1a1a1a;left:38.5px;transform-origin:0 50%;transform:scaleX(0.9795);clip-path:inset(0 0 6px 0);">2015.10.14 07:00:33.822</span>
<span class="t" style="top:989.0px;font-size:11px;line-height:12px;color:#1a1a1a;left:180px;transform-origin:0 50%;transform:scaleX(0.9860);clip-path:inset(0 0 6px 0);">Robo Grid FX EURUSDmicro,H1:</span>
<span class="t" style="top:989.0px;font-size:11px;line-height:12px;color:#1a1a1a;left:345px;transform-origin:0 50%;transform:scaleX(0.9696);clip-path:inset(0 0 6px 0);">Error(5020)</span>
<span class="t" style="top:989.0px;font-size:11px;line-height:12px;color:#1a1a1a;left:403.3px;transform-origin:0 50%;transform:scaleX(1.0537);clip-path:inset(0 0 6px 0);">set order: file does not exist, try 3</span>
<div class="r" style="left:1899px;top:741px;width:17px;height:254px;background:#f0f0f0;"></div>
<div class="r" style="left:1900px;top:758px;width:15px;height:17px;background:#cdcdcd;"></div>
<svg style="left:1903px;top:747px" width="9" height="8" viewBox="0 0 9 8"><path d="M1 5.500 L4.500 2 L8 5.500" stroke="#505050" stroke-width="1.700" fill="none"/></svg>
<svg style="left:1903px;top:984px" width="9" height="8" viewBox="0 0 9 8"><path d="M1 2 L4.500 5.500 L8 2" stroke="#505050" stroke-width="1.700" fill="none"/></svg>
<div class="r" style="left:16px;top:995px;width:1900px;height:1px;background:#111;"></div>
<div class="r" style="left:15px;top:996px;width:1905px;height:22px;background:#f0f0f0;"></div>
<span class="t" style="top:999.0px;font-size:11px;line-height:12px;color:#757575;left:27px;transform-origin:0 50%;transform:scaleX(0.9615);">Posizioni aperte</span>
<span class="t" style="top:999.0px;font-size:11px;line-height:12px;color:#757575;left:122px;transform-origin:0 50%;transform:scaleX(0.9322);">Esposizione</span>
<span class="t" style="top:999.0px;font-size:11px;line-height:12px;color:#757575;left:197px;transform-origin:0 50%;transform:scaleX(0.9659);">Storico operazioni</span>
<span class="t" style="top:999.0px;font-size:11px;line-height:12px;color:#757575;left:302px;transform-origin:0 50%;transform:scaleX(0.9412);">Notizie</span>
<span class="t" style="top:999.0px;font-size:11px;line-height:12px;color:#757575;left:367px;transform-origin:0 50%;transform:scaleX(0.8824);">Allarmi</span>
<span class="t" style="top:999.0px;font-size:11px;line-height:12px;color:#757575;left:417px;transform-origin:0 50%;transform:scaleX(0.9600);">Casella postale</span>
<span class="t" style="top:999.0px;font-size:11px;line-height:12px;color:#757575;left:509px;transform-origin:0 50%;transform:scaleX(0.9750);">Mercato</span>
<span class="t" style="top:999.0px;font-size:11px;line-height:12px;color:#757575;left:580px;transform-origin:0 50%;transform:scaleX(0.9189);">Segnali</span>
<span class="t" style="top:999.0px;font-size:11px;line-height:12px;color:#757575;left:634px;transform-origin:0 50%;transform:scaleX(0.9375);">Biblioteca</span>
<span class="t" style="top:1002.0px;font-size:9px;line-height:10px;color:#d02020;font-weight:bold;left:337px;transform-origin:0 50%;transform:scaleX(0.9500);">80</span>
<span class="t" style="top:1002.0px;font-size:9px;line-height:10px;color:#d02020;font-weight:bold;left:551px;transform-origin:0 50%;transform:scaleX(0.9500);">46</span>
<div class="r" style="left:113px;top:998px;width:1px;height:13px;background:#6a6a6a;"></div>
<div class="r" style="left:188px;top:998px;width:1px;height:13px;background:#6a6a6a;"></div>
<div class="r" style="left:293px;top:998px;width:1px;height:13px;background:#6a6a6a;"></div>
<div class="r" style="left:357px;top:998px;width:1px;height:13px;background:#6a6a6a;"></div>
<div class="r" style="left:408px;top:998px;width:1px;height:13px;background:#6a6a6a;"></div>
<div class="r" style="left:500px;top:998px;width:1px;height:13px;background:#6a6a6a;"></div>
<div class="r" style="left:571px;top:998px;width:1px;height:13px;background:#6a6a6a;"></div>
<div class="r" style="left:625px;top:998px;width:1px;height:13px;background:#6a6a6a;"></div>
<div class="r" style="left:805px;top:998px;width:1px;height:13px;background:#6a6a6a;"></div>
<div class="r" style="left:690px;top:995px;width:69px;height:18px;background:#fff;border:1px solid #111;border-top:none;border-bottom-width:2px;border-right-width:2px;"></div>
<span class="t" style="top:998.0px;font-size:11px;line-height:12px;color:#111;left:699px;transform-origin:0 50%;transform:scaleX(0.9412);">Consiglieri</span>
<span class="t" style="top:999.0px;font-size:11px;line-height:12px;color:#757575;left:767px;transform-origin:0 50%;transform:scaleX(0.9310);">Diario</span>
<div class="r" style="left:0px;top:1017px;width:1920px;height:1px;background:#a8a8a8;"></div>
<div class="r" style="left:0px;top:1018px;width:1920px;height:1px;background:#fbfbfb;"></div>
<svg style="left:1478px;top:940px;opacity:.55" width="50" height="52" viewBox="0 0 50 52"><circle cx="13" cy="13" r="10" fill="#d0d0d0" stroke="#bdbdbd" stroke-width="2.5"/><path d="M4 13 a9 9 0 0 1 18 0 z" fill="#f4f4f4"/><path d="M9 23 h7 v21 l-3.5 5 l-3.5 -5 z" fill="#c6c6c6"/><path d="M24 20 l6 -3 l16 24 l-2 6 l-5 -2 l-1 -4 l-3 -1 l-1 -4 l-3 -1 z" fill="#c9c9c9"/></svg>
<span class="t" style="top:947.0px;font-size:20px;line-height:22px;color:rgba(150,150,150,.62);left:1532px;transform-origin:0 50%;transform:scaleX(1.0000);">Attiva Windows</span>
<span class="t" style="top:973.0px;font-size:14px;line-height:16px;color:rgba(150,150,150,.55);left:1532px;transform-origin:0 50%;transform:scaleX(1.0373);">Passa a Impostazioni PC per attivare Windows.</span>
<div class="r" style="left:0px;top:1019px;width:1920px;height:22px;background:#f0f0f0;"></div>
<span class="t" style="top:1024.0px;font-size:12px;line-height:14px;color:#111;left:3px;transform-origin:0 50%;transform:scaleX(0.9216);">Per aiuto, premi F1</span>
<div class="r" style="left:1194px;top:1022px;width:1px;height:16px;background:#b4b4b4;"></div>
<div class="r" style="left:1310px;top:1022px;width:1px;height:16px;background:#b4b4b4;"></div>
<div class="r" style="left:1412px;top:1022px;width:1px;height:16px;background:#b4b4b4;"></div>
<div class="r" style="left:1483px;top:1022px;width:1px;height:16px;background:#b4b4b4;"></div>
<div class="r" style="left:1554px;top:1022px;width:1px;height:16px;background:#b4b4b4;"></div>
<div class="r" style="left:1622px;top:1022px;width:1px;height:16px;background:#b4b4b4;"></div>
<div class="r" style="left:1692px;top:1022px;width:1px;height:16px;background:#b4b4b4;"></div>
<div class="r" style="left:1758px;top:1022px;width:1px;height:16px;background:#b4b4b4;"></div>
<span class="t" style="top:1024.0px;font-size:12px;line-height:14px;color:#111;left:1200px;transform-origin:0 50%;transform:scaleX(1.0000);">Default</span>
<span class="t" style="top:1024.0px;font-size:12px;line-height:14px;color:#111;left:1316px;transform-origin:0 50%;transform:scaleX(0.9032);">2015.09.17 03:00</span>
<span class="t" style="top:1024.0px;font-size:12px;line-height:14px;color:#111;left:1418.5px;transform-origin:0 50%;transform:scaleX(0.8983);">O: 1.12902</span>
<span class="t" style="top:1024.0px;font-size:12px;line-height:14px;color:#111;left:1489px;transform-origin:0 50%;transform:scaleX(0.8983);">H: 1.13020</span>
<span class="t" style="top:1024.0px;font-size:12px;line-height:14px;color:#111;left:1560px;transform-origin:0 50%;transform:scaleX(0.8772);">L: 1.12890</span>
<span class="t" style="top:1024.0px;font-size:12px;line-height:14px;color:#111;left:1628.5px;transform-origin:0 50%;transform:scaleX(0.8644);">C: 1.12931</span>
<span class="t" style="top:1024.0px;font-size:12px;line-height:14px;color:#111;left:1698.5px;transform-origin:0 50%;transform:scaleX(0.8902);">V: 2932</span>
<span class="t" style="top:1024.0px;font-size:12px;line-height:14px;color:#111;left:1815px;transform-origin:0 50%;transform:scaleX(0.9318);">32398/37 kb</span>
<svg style="left:1763px;top:1025px" width="25" height="12" viewBox="0 0 25 12" shape-rendering="crispEdges"><rect x="1" y="0" width="2" height="10" fill="#5c7d16"/><rect x="1" y="11" width="2" height="1" fill="#9c1500"/><rect x="4" y="0" width="2" height="9" fill="#5c7d16"/><rect x="4" y="10" width="2" height="2" fill="#9c1500"/><rect x="7" y="0" width="2" height="7" fill="#5c7d16"/><rect x="7" y="8" width="2" height="4" fill="#9c1500"/><rect x="10" y="0" width="2" height="6" fill="#5c7d16"/><rect x="10" y="7" width="2" height="5" fill="#9c1500"/><rect x="13" y="0" width="2" height="5" fill="#5c7d16"/><rect x="13" y="6" width="2" height="6" fill="#9c1500"/><rect x="16" y="0" width="2" height="4" fill="#5c7d16"/><rect x="16" y="5" width="2" height="7" fill="#9c1500"/><rect x="19" y="0" width="2" height="2" fill="#5c7d16"/><rect x="19" y="3" width="2" height="9" fill="#9c1500"/><rect x="22" y="0" width="2" height="1" fill="#5c7d16"/><rect x="22" y="2" width="2" height="10" fill="#9c1500"/></svg>
<svg style="left:1904px;top:1025px" width="16" height="15" viewBox="0 0 16 15"><path d="M16 0 L1 15 M16 4 L5 15 M16 8 L9 15 M16 12 L13 15" stroke="#a8a8a8" stroke-width="1.3"/></svg>
<div class="r" style="left:0px;top:1040px;width:1920px;height:40px;background:#0e1a27;"></div>
<div class="r" style="left:0px;top:1040px;width:1920px;height:40px;background:radial-gradient(ellipse 420px 60px at 1180px 1060px,rgba(60,72,84,.45),rgba(14,26,39,0) 100%);"></div>
<svg style="left:7px;top:1040px" width="41" height="40" viewBox="0 0 41 40"><defs><radialGradient id="og" cx="50%" cy="45%" r="55%"><stop offset="0" stop-color="#3a8797"/><stop offset="1" stop-color="#1a4a5c"/></radialGradient></defs><circle cx="20.200" cy="19.900" r="18" fill="url(#og)" stroke="#9dbec7" stroke-width="1.500"/><g fill="none" stroke="#62c3c6" stroke-width="1.300" opacity="0.750"><path d="M16.500 26 a3.700 3.700 0 0 1 7.400 0"/><path d="M13.500 25 a6.700 6.700 0 0 1 13.400 0"/><path d="M11 23 a9.300 9.300 0 0 1 18.400 0"/></g><path d="M13 30.500 V27.500 L10 24.500 Q7.500 21.500 9 18.500 Q8.500 15 11.500 13.500 Q12.500 10.500 15.500 10.300 Q18 8 20.200 8.500 Q22.500 8 25 10.300 Q28 10.500 29 13.500 Q32 15 31.500 18.500 Q33 21.500 30.500 24.500 L27.500 27.500 V30.500 Z" fill="none" stroke="#e6e07e" stroke-width="1.300" stroke-linejoin="round"/></svg>
<svg style="left:70px;top:1041px" width="38" height="38" viewBox="0 0 38 38"><text x="8.200" y="33" font-family="Liberation Sans, sans-serif" font-weight="bold" font-size="47" fill="#3db6ee" textLength="25.500" lengthAdjust="spacingAndGlyphs">e</text><path d="M9.500 32.800 Q3.500 33.800 4.400 26 Q6 17 16 8.500 Q25 2 31 3.600 Q34 5 32.600 9.500" stroke="#f0c630" stroke-width="2.500" fill="none" stroke-linecap="round"/></svg>
<svg style="left:134px;top:1045px" width="34" height="33" viewBox="0 0 34 33"><path d="M2 5 h10 l2 3 h17 v22 h-29 z" fill="#f3d98a" stroke="#d9b95a" stroke-width="1"/><rect x="4" y="4" width="5" height="2.5" fill="#3ba54a"/><rect x="14" y="6" width="5" height="2.5" fill="#d9452f"/><rect x="22" y="8" width="5" height="2.5" fill="#3f8fd0"/><path d="M2 11 h29 v19 h-29 z" fill="#f8e6a4" stroke="#dcc06a" stroke-width="1"/><path d="M7 30 v-9 q0 -3 3 -3 h13 q3 0 3 3 v9 h-5 v-6 h-9 v6 z" fill="#7ab8ea" stroke="#4d8fc8" stroke-width="1"/></svg>
<svg style="left:198px;top:1045px" width="30" height="30" viewBox="0 0 30 30"><circle cx="15" cy="15" r="14" fill="#dd4b3e"/><path d="M15 15 L2.9 8 A14 14 0 0 0 14 28.96 L21 17 Z" fill="#3aa757"/><path d="M15 15 L21.5 18.5 L14 28.96 A14 14 0 0 0 27.6 9 L15 9 Z" fill="#fdd23e"/><circle cx="15" cy="15" r="6.4" fill="#f4f4f4"/><circle cx="15" cy="15" r="5" fill="#4a8af4"/></svg>
<div class="r" style="left:246px;top:1041px;width:58px;height:39px;background:linear-gradient(to bottom,#5b5f64,#777b80);border:1px solid #c9c9c9;border-bottom:none;"></div>
<svg style="left:259px;top:1044px" width="33" height="32" viewBox="0 0 33 32"><rect x="0" y="0" width="32" height="31" rx="4" fill="#0b0b0d"/><rect x="0" y="0" width="32" height="14" rx="4" fill="#222326"/><path d="M3.5 9 L8 15.5 L3.5 22" stroke="#e02a20" stroke-width="2.6" fill="none"/><text x="7" y="20.5" font-family="Liberation Sans, sans-serif" font-weight="bold" font-style="italic" font-size="14" fill="#fff" textLength="22" lengthAdjust="spacingAndGlyphs">XM</text></svg>
<svg style="left:1733px;top:1058px" width="9" height="6" viewBox="0 0 9 6"><path d="M0.5 5 L4.5 0.8 L8.5 5 Z" fill="#f0f0f0"/></svg>
<svg style="left:1753px;top:1053px" width="18" height="16" viewBox="0 0 18 16"><path d="M2.5 1 V15" stroke="#f4f4f4" stroke-width="1.4"/><path d="M3.5 2 h7 v1.5 h5.5 l-1.6 3 l1 2.5 h-6 v-1.5 h-5.9 z" fill="#f4f4f4"/></svg>
<svg style="left:1778px;top:1055px" width="16" height="12" viewBox="0 0 16 12" shape-rendering="crispEdges"><rect x="1" y="9" width="2" height="2" fill="#f4f4f4"/><rect x="4" y="7" width="2" height="4" fill="#f4f4f4"/><rect x="7" y="5" width="2" height="6" fill="#c8c8c8"/><rect x="10" y="3" width="2" height="8" fill="#b0b0b0"/><rect x="13" y="1" width="2" height="10" fill="#a0a0a0"/></svg>
<svg style="left:1802px;top:1053px" width="18" height="18" viewBox="0 0 18 18"><path d="M1 6.5 h2.5 l4 -4.5 v13 l-4 -4.5 h-2.500 z" fill="#f4f4f4"/><circle cx="11" cy="12" r="4.6" fill="#f7f7f7"/><circle cx="11" cy="12" r="3.6" fill="none" stroke="#d8262c" stroke-width="1.7"/><path d="M8.6 9.6 L13.4 14.4" stroke="#d8262c" stroke-width="1.7"/></svg>
<span class="t" style="top:1046.0px;font-size:12px;line-height:14px;color:#f2f2f2;left:1852px;transform-origin:0 50%;transform:scaleX(0.8833);">07.01</span>
<span class="t" style="top:1063.0px;font-size:12px;line-height:14px;color:#f2f2f2;left:1837px;transform-origin:0 50%;transform:scaleX(0.9500);">14/10/2015</span>
</body></html>
